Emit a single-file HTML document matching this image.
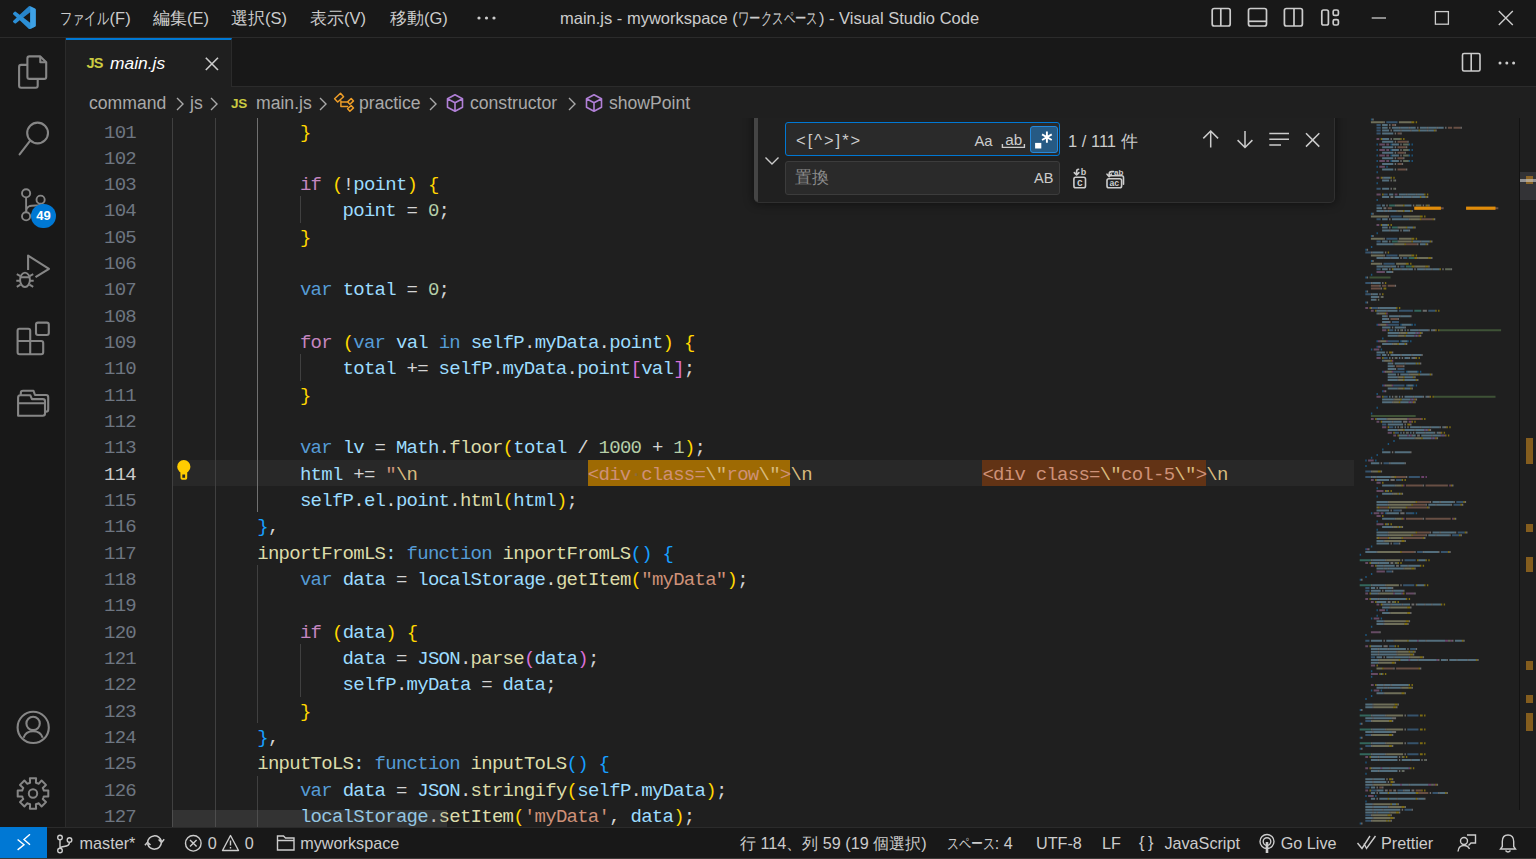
<!DOCTYPE html><html><head><meta charset="utf-8"><style>
*{margin:0;padding:0;box-sizing:border-box}
html,body{width:1536px;height:859px;overflow:hidden;background:#1f1f1f;font-family:"Liberation Sans",sans-serif}
.abs{position:absolute}
#title{position:absolute;left:0;top:0;width:1536px;height:38px;background:#181818;border-bottom:1px solid #2b2b2b}
.menu{position:absolute;top:8px;font-size:16.5px;color:#cccccc;white-space:nowrap;line-height:20px}
#act{position:absolute;left:0;top:38px;width:66px;height:789px;background:#181818;border-right:1px solid #2b2b2b}
#tabs{position:absolute;left:66px;top:38px;width:1470px;height:49px;background:#181818;border-bottom:1px solid #2b2b2b}
#tab{position:absolute;left:0;top:0;width:166px;height:49px;background:#1f1f1f;border-top:2px solid #0078d4;border-right:1px solid #2b2b2b}
#crumbs{position:absolute;left:66px;top:87px;width:1470px;height:31px;background:#1f1f1f}
.bc{position:absolute;top:5px;font-size:17.6px;color:#a9a9a9;white-space:nowrap;line-height:22px}
#editor{position:absolute;left:66px;top:117px;width:1470px;height:710px;background:#1f1f1f;overflow:hidden}
.ln{position:absolute;left:60px;width:76px;text-align:right;font-family:"Liberation Mono",monospace;font-size:19px;letter-spacing:-0.74px;line-height:26.32px;color:#6e7681}
.ln.act{color:#cccccc}
.gd{position:absolute;width:1px;height:26.4px;background:#404040}
.ga{background:#707070}
.cl{position:absolute;left:172.0px;white-space:pre;font-family:"Liberation Mono",monospace;font-size:19px;letter-spacing:-0.74px;line-height:26.32px}
.m1{background:#9e6a03;color:#ce9178}
.m2{background:#623315;color:#ce9178}
.ws{color:#8a6a3a}
#status{position:absolute;left:0;top:827px;width:1536px;height:31px;background:#181818;border-top:1px solid #2b2b2b;}
.st{position:absolute;top:5px;font-size:16.2px;color:#cccccc;white-space:nowrap;line-height:20px}
</style></head><body>
<div id="title">
<svg class="abs" style="left:13px;top:5.7px" width="22.8" height="23.2" viewBox="0 0 100 100" preserveAspectRatio="none"><path fill="#2c8fd6" d="M96.46 10.8L75.86.87a6.23 6.23 0 0 0-7.1 1.2L29.35 38.04 12.17 25.01a4.16 4.16 0 0 0-5.32.24L1.34 30.26a4.17 4.17 0 0 0 0 6.16L16.24 50 1.35 63.58a4.17 4.17 0 0 0 0 6.16l5.5 5.01a4.16 4.16 0 0 0 5.330.24l17.18-13.03 39.41 35.96a6.22 6.22 0 0 0 7.1 1.2l20.6-9.92A6.25 6.25 0 0 0 100 83.580V16.42a6.25 6.25 0 0 0-3.54-5.630zM75.01 72.7 45.11 50l29.9-22.7v45.4z"/><path fill="#1f6fb4" d="M96.46 10.8L75.86.87a6.23 6.23 0 0 0-7.1 1.2L29.35 38.04 45.11 50l29.9-22.7V.9z" opacity="0.35"/><path fill="#4fb3f6" d="M75.86.87v98.26l20.6-9.92A6.25 6.25 0 0 0 100 83.58V16.42a6.25 6.25 0 0 0-3.54-5.63z" opacity="0.5"/></svg>
<div class="menu" style="left:60px;width:70px"><span style="display:inline-block;transform:scaleX(0.72);transform-origin:0 0;margin-right:-18.4px">ファイル</span>(F)</div>
<div class="menu" style="left:153px;width:55px">編集(E)</div>
<div class="menu" style="left:231px;width:55px">選択(S)</div>
<div class="menu" style="left:310px;width:57px">表示(V)</div>
<div class="menu" style="left:390px;width:58px">移動(G)</div>
<svg class="abs" style="left:476px;top:15px" width="22" height="6"><circle cx="3" cy="3" r="1.6" fill="#cccccc"/><circle cx="10.5" cy="3" r="1.6" fill="#cccccc"/><circle cx="18" cy="3" r="1.6" fill="#cccccc"/></svg>
<div class="menu" style="left:560px">main.js - myworkspace (<span style="display:inline-block;transform:scaleX(0.67);transform-origin:0 0;margin-right:-38px">ワークスペース</span>) - Visual Studio Code</div>
<svg class="abs" style="left:0;top:0" width="1536" height="38" fill="none" stroke="#cccccc" stroke-width="1.7">
<rect x="1212.2" y="8.5" width="18" height="17.5" rx="2"/><line x1="1220.8" y1="8.5" x2="1220.8" y2="26"/>
<rect x="1248.5" y="8.5" width="18" height="17.5" rx="2"/><line x1="1248.5" y1="21.3" x2="1266.5" y2="21.3"/>
<rect x="1284.4" y="8.5" width="18" height="17.5" rx="2"/><line x1="1294" y1="8.5" x2="1294" y2="26"/>
<rect x="1321.8" y="10" width="6.6" height="15" rx="1.8"/><rect x="1333.2" y="10" width="5.2" height="5.4" rx="1.5"/><rect x="1333.2" y="19.6" width="5.2" height="5.4" rx="1.5"/>
<line x1="1371.7" y1="18" x2="1386" y2="18" stroke-width="1.3"/>
<rect x="1435.4" y="11.6" width="13" height="12.6" stroke-width="1.3"/>
<path d="M1498.8 11 L1512.8 25 M1512.8 11 L1498.8 25" stroke-width="1.4"/>
</svg>
</div>
<div id="act"><svg class="abs" style="left:0;top:-38px" width="66" height="827" fill="none" stroke="#868686" stroke-width="2.1" stroke-linejoin="round">
<path d="M27.4 64.9 H21.1 Q19.1 64.9 19.1 66.9 V85.7 Q19.1 87.7 21.1 87.7 H35.7 Q37.7 87.7 37.7 85.7 V78.9"/>
<path d="M29.4 56.4 H40.3 L46.2 62.3 V76.9 Q46.2 78.9 44.2 78.9 H29.4 Q27.4 78.9 27.4 76.9 V58.4 Q27.4 56.4 29.4 56.4 Z"/><path d="M40.3 56.4 V62.3 H46.2"/>
<circle cx="37.6" cy="133" r="10.4"/><path d="M30.2 140.6 L19.6 154.4" stroke-linecap="round"/>
<circle cx="26.1" cy="193.3" r="4.1" stroke-width="1.9"/><circle cx="40.6" cy="199.7" r="4.1" stroke-width="1.9"/><circle cx="26.1" cy="216.3" r="4.1" stroke-width="1.9"/>
<path d="M26.1 197.4 V212.2 M26.1 212 C26.1 206 30 205.5 36 205.5 C39 205.5 40.6 205 40.6 203.8" stroke-width="1.9"/>
<path d="M28.1 270 V255.6 L49 268.8 L35.5 277.2"/>
<ellipse cx="25" cy="279.8" rx="4.9" ry="7.2" stroke-width="1.9"/><path d="M20.3 277.3 H29.7 M16.8 274.2 L20.4 276.2 M16.3 280.8 H20.1 M16.8 286.9 L20.5 284.6 M33.2 274.2 L29.6 276.2 M33.7 280.8 H29.9 M33.2 286.9 L29.5 284.6" stroke-width="1.9"/>
<path d="M19.4 328.7 H28.3 Q30.2 328.7 30.2 330.6 V341 H41.2 Q43.2 341 43.2 343 V352.2 Q43.2 354.2 41.2 354.2 H19.6 Q17.6 354.2 17.6 352.2 V330.6 Q17.6 328.7 19.4 328.7 Z M17.6 341 H30.2 V354.2"/><rect x="36" y="322.6" width="12.8" height="12.4" rx="2"/>
<path d="M18.1 415.7 V397.5 Q18.1 395.2 20.4 395.2 H30.3 L31.9 399.1 H42.8 Q45 399.1 45 401.3 V413.5 Q45 415.7 42.8 415.7 Z M18.1 403.3 H45"/><path d="M20.8 395 V393 Q20.8 390.8 23 390.8 H33.5 L35 395 H46 Q48.2 395 48.2 397.2 V409.6 Q48.2 411.8 46 411.8 H45"/>
<circle cx="33.2" cy="727.4" r="15.6" stroke-width="2.1"/><circle cx="33.1" cy="723.4" r="6.7" stroke-width="2.1"/><path d="M23.5 737.8 Q25.5 731.2 33.1 731.2 Q40.7 731.2 42.7 737.8" stroke-width="2.1"/>
<path d="M28.7 783.2 L30.1 782.7 L29.9 778.2 L36.1 778.2 L35.9 782.7 L37.3 783.2 L37.3 783.2 L38.6 783.8 L41.6 780.5 L46.0 784.9 L42.7 787.9 L43.3 789.2 L43.3 789.2 L43.8 790.6 L48.3 790.4 L48.3 796.6 L43.8 796.4 L43.3 797.8 L43.3 797.8 L42.7 799.1 L46.0 802.1 L41.6 806.5 L38.6 803.2 L37.3 803.8 L37.3 803.8 L35.9 804.3 L36.1 808.8 L29.9 808.8 L30.1 804.3 L28.7 803.8 L28.7 803.8 L27.4 803.2 L24.4 806.5 L20.0 802.1 L23.3 799.1 L22.7 797.8 L22.7 797.8 L22.2 796.4 L17.7 796.6 L17.7 790.4 L22.2 790.6 L22.7 789.2 L22.7 789.2 L23.3 787.9 L20.0 784.9 L24.4 780.5 L27.4 783.8 L28.7 783.2 Z" stroke-width="2"/>
<circle cx="33" cy="793.5" r="4.2" stroke-width="2"/>
</svg>
<div class="abs" style="left:31.4px;top:166.4px;width:24.4px;height:23.4px;border-radius:12px;background:#0078d4;color:#fff;font-size:13px;font-weight:bold;text-align:center;line-height:23.4px">49</div></div>
<div id="tabs"><div id="tab"></div></div>
<div class="abs" style="left:86.5px;top:53.5px;font-size:14.5px;font-weight:bold;color:#cbcb41;letter-spacing:-0.8px;line-height:18px">JS</div>
<div class="abs" style="left:110px;top:52px;font-size:17.4px;font-style:italic;color:#ffffff;line-height:22px">main.js</div>
<svg class="abs" style="left:204px;top:56px" width="16" height="16" fill="none" stroke="#cccccc" stroke-width="1.6"><path d="M1.8 1.8 L14 14 M14 1.8 L1.8 14"/></svg>
<svg class="abs" style="left:1461px;top:52px" width="20" height="20" fill="none" stroke="#cccccc" stroke-width="1.6"><rect x="1.5" y="1.5" width="17.5" height="17.5" rx="1.5"/><line x1="10.2" y1="1.5" x2="10.2" y2="19"/></svg>
<svg class="abs" style="left:1497px;top:60px" width="20" height="6"><circle cx="3" cy="3" r="1.5" fill="#cccccc"/><circle cx="9.8" cy="3" r="1.5" fill="#cccccc"/><circle cx="16.6" cy="3" r="1.5" fill="#cccccc"/></svg>
<div id="crumbs"></div>
<div class="bc" style="left:89px;top:92px">command</div><svg class="abs" style="left:175px;top:96px" width="10" height="16" fill="none" stroke="#a9a9a9" stroke-width="1.4"><path d="M2 2 L8 8 L2 14"/></svg><div class="bc" style="left:190px;top:92px">js</div><svg class="abs" style="left:209px;top:96px" width="10" height="16" fill="none" stroke="#a9a9a9" stroke-width="1.4"><path d="M2 2 L8 8 L2 14"/></svg><div class="abs" style="left:231px;top:96px;font-size:13.5px;font-weight:bold;color:#cbcb41;letter-spacing:-0.3px;line-height:16px">JS</div><div class="bc" style="left:256px;top:92px">main.js</div><svg class="abs" style="left:318px;top:96px" width="10" height="16" fill="none" stroke="#a9a9a9" stroke-width="1.4"><path d="M2 2 L8 8 L2 14"/></svg><svg class="abs" style="left:332px;top:90px" width="24" height="24" fill="none" stroke="#ee9d28" stroke-width="1.5" stroke-linejoin="round"><path d="M2.6 8.8 L8.5 3.3 L11.6 6.8 L5.7 12 Z M15.6 11.9 L19.2 8.5 L21.5 10.9 L17.9 14.2 Z M15.6 18.7 L19.2 15.5 L21.5 17.9 L17.9 21.3 Z M8.9 10.5 V16.4 H16.2 M8.6 11.9 H16"/></svg><div class="bc" style="left:359px;top:92px">practice</div><svg class="abs" style="left:428px;top:96px" width="10" height="16" fill="none" stroke="#a9a9a9" stroke-width="1.4"><path d="M2 2 L8 8 L2 14"/></svg><svg class="abs" style="left:445px;top:93px" width="20" height="20" fill="none" stroke="#b180d7" stroke-width="1.6" stroke-linejoin="round"><path d="M10 1.8 L17.5 5.8 V14.2 L10 18.2 L2.5 14.2 V5.8 Z M2.5 5.8 L10 9.8 L17.5 5.8 M10 9.8 V18.2"/></svg><div class="bc" style="left:470px;top:92px">constructor</div><svg class="abs" style="left:567px;top:96px" width="10" height="16" fill="none" stroke="#a9a9a9" stroke-width="1.4"><path d="M2 2 L8 8 L2 14"/></svg><svg class="abs" style="left:584px;top:93px" width="20" height="20" fill="none" stroke="#b180d7" stroke-width="1.6" stroke-linejoin="round"><path d="M10 1.8 L17.5 5.8 V14.2 L10 18.2 L2.5 14.2 V5.8 Z M2.5 5.8 L10 9.8 L17.5 5.8 M10 9.8 V18.2"/></svg><div class="bc" style="left:609px;top:92px">showPoint</div>
<div id="editor"></div>
<div class="abs" style="left:0;top:0;width:1354px;height:827px;overflow:hidden">
<div class="abs" style="left:172px;top:459.66px;width:1182px;height:26.32px;background:#282828"></div>
<div class="abs" style="left:587.74px;top:459.66px;width:202.54px;height:26.32px;background:#9e6a03"></div>
<div class="abs" style="left:982.16px;top:459.66px;width:223.86px;height:26.32px;background:#623315"></div>
<div class="ln" style="top:119.50px">101</div>
<div class="gd" style="left:172.0px;top:117.50px"></div>
<div class="gd" style="left:214.6px;top:117.50px"></div>
<div class="gd ga" style="left:257.3px;top:117.50px"></div>
<div class="cl" style="top:117.50px;padding-top:2px"><span style="color:#d4d4d4">            </span><span style="color:#ffd700">}</span></div>
<div class="ln" style="top:145.82px">102</div>
<div class="gd" style="left:172.0px;top:143.82px"></div>
<div class="gd" style="left:214.6px;top:143.82px"></div>
<div class="gd ga" style="left:257.3px;top:143.82px"></div>
<div class="cl" style="top:143.82px;padding-top:2px"></div>
<div class="ln" style="top:172.14px">103</div>
<div class="gd" style="left:172.0px;top:170.14px"></div>
<div class="gd" style="left:214.6px;top:170.14px"></div>
<div class="gd ga" style="left:257.3px;top:170.14px"></div>
<div class="cl" style="top:170.14px;padding-top:2px"><span style="color:#d4d4d4">            </span><span style="color:#c586c0">if</span><span style="color:#d4d4d4"> </span><span style="color:#ffd700">(</span><span style="color:#d4d4d4">!</span><span style="color:#9cdcfe">point</span><span style="color:#ffd700">)</span><span style="color:#d4d4d4"> </span><span style="color:#ffd700">{</span></div>
<div class="ln" style="top:198.46px">104</div>
<div class="gd" style="left:172.0px;top:196.46px"></div>
<div class="gd" style="left:214.6px;top:196.46px"></div>
<div class="gd ga" style="left:257.3px;top:196.46px"></div>
<div class="gd" style="left:299.9px;top:196.46px"></div>
<div class="cl" style="top:196.46px;padding-top:2px"><span style="color:#d4d4d4">                </span><span style="color:#9cdcfe">point</span><span style="color:#d4d4d4"> = </span><span style="color:#b5cea8">0</span><span style="color:#d4d4d4">;</span></div>
<div class="ln" style="top:224.78px">105</div>
<div class="gd" style="left:172.0px;top:222.78px"></div>
<div class="gd" style="left:214.6px;top:222.78px"></div>
<div class="gd ga" style="left:257.3px;top:222.78px"></div>
<div class="cl" style="top:222.78px;padding-top:2px"><span style="color:#d4d4d4">            </span><span style="color:#ffd700">}</span></div>
<div class="ln" style="top:251.10px">106</div>
<div class="gd" style="left:172.0px;top:249.10px"></div>
<div class="gd" style="left:214.6px;top:249.10px"></div>
<div class="gd ga" style="left:257.3px;top:249.10px"></div>
<div class="cl" style="top:249.10px;padding-top:2px"></div>
<div class="ln" style="top:277.42px">107</div>
<div class="gd" style="left:172.0px;top:275.42px"></div>
<div class="gd" style="left:214.6px;top:275.42px"></div>
<div class="gd ga" style="left:257.3px;top:275.42px"></div>
<div class="cl" style="top:275.42px;padding-top:2px"><span style="color:#d4d4d4">            </span><span style="color:#569cd6">var</span><span style="color:#d4d4d4"> </span><span style="color:#9cdcfe">total</span><span style="color:#d4d4d4"> = </span><span style="color:#b5cea8">0</span><span style="color:#d4d4d4">;</span></div>
<div class="ln" style="top:303.74px">108</div>
<div class="gd" style="left:172.0px;top:301.74px"></div>
<div class="gd" style="left:214.6px;top:301.74px"></div>
<div class="gd ga" style="left:257.3px;top:301.74px"></div>
<div class="cl" style="top:301.74px;padding-top:2px"></div>
<div class="ln" style="top:330.06px">109</div>
<div class="gd" style="left:172.0px;top:328.06px"></div>
<div class="gd" style="left:214.6px;top:328.06px"></div>
<div class="gd ga" style="left:257.3px;top:328.06px"></div>
<div class="cl" style="top:328.06px;padding-top:2px"><span style="color:#d4d4d4">            </span><span style="color:#c586c0">for</span><span style="color:#d4d4d4"> </span><span style="color:#ffd700">(</span><span style="color:#569cd6">var</span><span style="color:#d4d4d4"> </span><span style="color:#9cdcfe">val</span><span style="color:#d4d4d4"> </span><span style="color:#569cd6">in</span><span style="color:#d4d4d4"> </span><span style="color:#9cdcfe">selfP</span><span style="color:#d4d4d4">.</span><span style="color:#9cdcfe">myData</span><span style="color:#d4d4d4">.</span><span style="color:#9cdcfe">point</span><span style="color:#ffd700">)</span><span style="color:#d4d4d4"> </span><span style="color:#ffd700">{</span></div>
<div class="ln" style="top:356.38px">110</div>
<div class="gd" style="left:172.0px;top:354.38px"></div>
<div class="gd" style="left:214.6px;top:354.38px"></div>
<div class="gd ga" style="left:257.3px;top:354.38px"></div>
<div class="gd" style="left:299.9px;top:354.38px"></div>
<div class="cl" style="top:354.38px;padding-top:2px"><span style="color:#d4d4d4">                </span><span style="color:#9cdcfe">total</span><span style="color:#d4d4d4"> += </span><span style="color:#9cdcfe">selfP</span><span style="color:#d4d4d4">.</span><span style="color:#9cdcfe">myData</span><span style="color:#d4d4d4">.</span><span style="color:#9cdcfe">point</span><span style="color:#da70d6">[</span><span style="color:#9cdcfe">val</span><span style="color:#da70d6">]</span><span style="color:#d4d4d4">;</span></div>
<div class="ln" style="top:382.70px">111</div>
<div class="gd" style="left:172.0px;top:380.70px"></div>
<div class="gd" style="left:214.6px;top:380.70px"></div>
<div class="gd ga" style="left:257.3px;top:380.70px"></div>
<div class="cl" style="top:380.70px;padding-top:2px"><span style="color:#d4d4d4">            </span><span style="color:#ffd700">}</span></div>
<div class="ln" style="top:409.02px">112</div>
<div class="gd" style="left:172.0px;top:407.02px"></div>
<div class="gd" style="left:214.6px;top:407.02px"></div>
<div class="gd ga" style="left:257.3px;top:407.02px"></div>
<div class="cl" style="top:407.02px;padding-top:2px"></div>
<div class="ln" style="top:435.34px">113</div>
<div class="gd" style="left:172.0px;top:433.34px"></div>
<div class="gd" style="left:214.6px;top:433.34px"></div>
<div class="gd ga" style="left:257.3px;top:433.34px"></div>
<div class="cl" style="top:433.34px;padding-top:2px"><span style="color:#d4d4d4">            </span><span style="color:#569cd6">var</span><span style="color:#d4d4d4"> </span><span style="color:#9cdcfe">lv</span><span style="color:#d4d4d4"> = </span><span style="color:#9cdcfe">Math</span><span style="color:#d4d4d4">.</span><span style="color:#dcdcaa">floor</span><span style="color:#ffd700">(</span><span style="color:#9cdcfe">total</span><span style="color:#d4d4d4"> / </span><span style="color:#b5cea8">1000</span><span style="color:#d4d4d4"> + </span><span style="color:#b5cea8">1</span><span style="color:#ffd700">)</span><span style="color:#d4d4d4">;</span></div>
<div class="ln act" style="top:461.66px">114</div>
<div class="gd" style="left:172.0px;top:459.66px"></div>
<div class="gd" style="left:214.6px;top:459.66px"></div>
<div class="gd ga" style="left:257.3px;top:459.66px"></div>
<div class="cl" style="top:459.66px;padding-top:2px"><span style="color:#d4d4d4">            </span><span style="color:#9cdcfe">html</span><span style="color:#d4d4d4"> += </span><span style="color:#ce9178">&quot;</span><span style="color:#d7ba7d">\n</span><span style="color:#ce9178">                </span><span style="color:#ce9178">&lt;div</span><span class=ws>·</span><span style="color:#ce9178">class=</span><span style="color:#d7ba7d">\&quot;</span><span style="color:#ce9178">row</span><span style="color:#d7ba7d">\&quot;</span><span style="color:#ce9178">&gt;</span><span style="color:#d7ba7d">\n</span><span style="color:#ce9178">                </span><span style="color:#ce9178">&lt;div class=</span><span style="color:#d7ba7d">\&quot;</span><span style="color:#ce9178">col-5</span><span style="color:#d7ba7d">\&quot;</span><span style="color:#ce9178">&gt;</span><span style="color:#d7ba7d">\n</span></div>
<div class="ln" style="top:487.98px">115</div>
<div class="gd" style="left:172.0px;top:485.98px"></div>
<div class="gd" style="left:214.6px;top:485.98px"></div>
<div class="gd ga" style="left:257.3px;top:485.98px"></div>
<div class="cl" style="top:485.98px;padding-top:2px"><span style="color:#d4d4d4">            </span><span style="color:#9cdcfe">selfP</span><span style="color:#d4d4d4">.</span><span style="color:#9cdcfe">el</span><span style="color:#d4d4d4">.</span><span style="color:#9cdcfe">point</span><span style="color:#d4d4d4">.</span><span style="color:#dcdcaa">html</span><span style="color:#ffd700">(</span><span style="color:#9cdcfe">html</span><span style="color:#ffd700">)</span><span style="color:#d4d4d4">;</span></div>
<div class="ln" style="top:514.30px">116</div>
<div class="gd" style="left:172.0px;top:512.30px"></div>
<div class="gd" style="left:214.6px;top:512.30px"></div>
<div class="cl" style="top:512.30px;padding-top:2px"><span style="color:#d4d4d4">        </span><span style="color:#179fff">}</span><span style="color:#d4d4d4">,</span></div>
<div class="ln" style="top:540.62px">117</div>
<div class="gd" style="left:172.0px;top:538.62px"></div>
<div class="gd" style="left:214.6px;top:538.62px"></div>
<div class="cl" style="top:538.62px;padding-top:2px"><span style="color:#d4d4d4">        </span><span style="color:#dcdcaa">inportFromLS</span><span style="color:#9cdcfe">:</span><span style="color:#d4d4d4"> </span><span style="color:#569cd6">function</span><span style="color:#d4d4d4"> </span><span style="color:#dcdcaa">inportFromLS</span><span style="color:#179fff">()</span><span style="color:#d4d4d4"> </span><span style="color:#179fff">{</span></div>
<div class="ln" style="top:566.94px">118</div>
<div class="gd" style="left:172.0px;top:564.94px"></div>
<div class="gd" style="left:214.6px;top:564.94px"></div>
<div class="gd" style="left:257.3px;top:564.94px"></div>
<div class="cl" style="top:564.94px;padding-top:2px"><span style="color:#d4d4d4">            </span><span style="color:#569cd6">var</span><span style="color:#d4d4d4"> </span><span style="color:#9cdcfe">data</span><span style="color:#d4d4d4"> = </span><span style="color:#9cdcfe">localStorage</span><span style="color:#d4d4d4">.</span><span style="color:#dcdcaa">getItem</span><span style="color:#ffd700">(</span><span style="color:#ce9178">&quot;myData&quot;</span><span style="color:#ffd700">)</span><span style="color:#d4d4d4">;</span></div>
<div class="ln" style="top:593.26px">119</div>
<div class="gd" style="left:172.0px;top:591.26px"></div>
<div class="gd" style="left:214.6px;top:591.26px"></div>
<div class="gd" style="left:257.3px;top:591.26px"></div>
<div class="cl" style="top:591.26px;padding-top:2px"></div>
<div class="ln" style="top:619.58px">120</div>
<div class="gd" style="left:172.0px;top:617.58px"></div>
<div class="gd" style="left:214.6px;top:617.58px"></div>
<div class="gd" style="left:257.3px;top:617.58px"></div>
<div class="cl" style="top:617.58px;padding-top:2px"><span style="color:#d4d4d4">            </span><span style="color:#c586c0">if</span><span style="color:#d4d4d4"> </span><span style="color:#ffd700">(</span><span style="color:#9cdcfe">data</span><span style="color:#ffd700">)</span><span style="color:#d4d4d4"> </span><span style="color:#ffd700">{</span></div>
<div class="ln" style="top:645.90px">121</div>
<div class="gd" style="left:172.0px;top:643.90px"></div>
<div class="gd" style="left:214.6px;top:643.90px"></div>
<div class="gd" style="left:257.3px;top:643.90px"></div>
<div class="gd" style="left:299.9px;top:643.90px"></div>
<div class="cl" style="top:643.90px;padding-top:2px"><span style="color:#d4d4d4">                </span><span style="color:#9cdcfe">data</span><span style="color:#d4d4d4"> = </span><span style="color:#9cdcfe">JSON</span><span style="color:#d4d4d4">.</span><span style="color:#dcdcaa">parse</span><span style="color:#da70d6">(</span><span style="color:#9cdcfe">data</span><span style="color:#da70d6">)</span><span style="color:#d4d4d4">;</span></div>
<div class="ln" style="top:672.22px">122</div>
<div class="gd" style="left:172.0px;top:670.22px"></div>
<div class="gd" style="left:214.6px;top:670.22px"></div>
<div class="gd" style="left:257.3px;top:670.22px"></div>
<div class="gd" style="left:299.9px;top:670.22px"></div>
<div class="cl" style="top:670.22px;padding-top:2px"><span style="color:#d4d4d4">                </span><span style="color:#9cdcfe">selfP</span><span style="color:#d4d4d4">.</span><span style="color:#9cdcfe">myData</span><span style="color:#d4d4d4"> = </span><span style="color:#9cdcfe">data</span><span style="color:#d4d4d4">;</span></div>
<div class="ln" style="top:698.54px">123</div>
<div class="gd" style="left:172.0px;top:696.54px"></div>
<div class="gd" style="left:214.6px;top:696.54px"></div>
<div class="gd" style="left:257.3px;top:696.54px"></div>
<div class="cl" style="top:696.54px;padding-top:2px"><span style="color:#d4d4d4">            </span><span style="color:#ffd700">}</span></div>
<div class="ln" style="top:724.86px">124</div>
<div class="gd" style="left:172.0px;top:722.86px"></div>
<div class="gd" style="left:214.6px;top:722.86px"></div>
<div class="cl" style="top:722.86px;padding-top:2px"><span style="color:#d4d4d4">        </span><span style="color:#179fff">}</span><span style="color:#d4d4d4">,</span></div>
<div class="ln" style="top:751.18px">125</div>
<div class="gd" style="left:172.0px;top:749.18px"></div>
<div class="gd" style="left:214.6px;top:749.18px"></div>
<div class="cl" style="top:749.18px;padding-top:2px"><span style="color:#d4d4d4">        </span><span style="color:#dcdcaa">inputToLS</span><span style="color:#9cdcfe">:</span><span style="color:#d4d4d4"> </span><span style="color:#569cd6">function</span><span style="color:#d4d4d4"> </span><span style="color:#dcdcaa">inputToLS</span><span style="color:#179fff">()</span><span style="color:#d4d4d4"> </span><span style="color:#179fff">{</span></div>
<div class="ln" style="top:777.50px">126</div>
<div class="gd" style="left:172.0px;top:775.50px"></div>
<div class="gd" style="left:214.6px;top:775.50px"></div>
<div class="gd" style="left:257.3px;top:775.50px"></div>
<div class="cl" style="top:775.50px;padding-top:2px"><span style="color:#d4d4d4">            </span><span style="color:#569cd6">var</span><span style="color:#d4d4d4"> </span><span style="color:#9cdcfe">data</span><span style="color:#d4d4d4"> = </span><span style="color:#9cdcfe">JSON</span><span style="color:#d4d4d4">.</span><span style="color:#dcdcaa">stringify</span><span style="color:#ffd700">(</span><span style="color:#9cdcfe">selfP</span><span style="color:#d4d4d4">.</span><span style="color:#9cdcfe">myData</span><span style="color:#ffd700">)</span><span style="color:#d4d4d4">;</span></div>
<div class="ln" style="top:803.82px">127</div>
<div class="gd" style="left:172.0px;top:801.82px"></div>
<div class="gd" style="left:214.6px;top:801.82px"></div>
<div class="gd" style="left:257.3px;top:801.82px"></div>
<div class="cl" style="top:801.82px;padding-top:2px"><span style="color:#d4d4d4">            </span><span style="color:#9cdcfe">localStorage</span><span style="color:#d4d4d4">.</span><span style="color:#dcdcaa">setItem</span><span style="color:#ffd700">(</span><span style="color:#ce9178">&#x27;myData&#x27;</span><span style="color:#d4d4d4">, </span><span style="color:#9cdcfe">data</span><span style="color:#ffd700">)</span><span style="color:#d4d4d4">;</span></div>
<svg class="abs" style="left:170px;top:455px" width="30" height="30"><circle cx="13.8" cy="11.7" r="6.6" fill="#ffcc00"/><path d="M10.3 14 H17.3 L17.2 23 Q17.2 24.8 15.5 24.8 H12.2 Q10.5 24.8 10.5 23 Z" fill="#ffcc00"/><rect x="12.3" y="19.5" width="2.8" height="3.3" fill="#282828"/></svg>
<div class="abs" style="left:172px;top:810px;width:275px;height:17px;background:rgba(121,121,121,0.22)"></div>
</div>
<div class="abs" style="left:0;top:117.5px;width:1354px;height:120px;overflow:hidden">
<div class="abs" style="left:754px;top:-10px;width:581px;height:95.8px;background:#202020;border:1px solid #303030;border-left:none;border-radius:0 0 5px 5px;box-shadow:0 0 8px 2px rgba(0,0,0,0.36);overflow:hidden">
<div class="abs" style="left:0;top:0;width:4px;height:96px;background:#454545"></div>
</div></div>
<svg class="abs" style="left:764px;top:154px" width="16" height="14" fill="none" stroke="#cccccc" stroke-width="1.4"><path d="M1.5 3.5 L8 10 L14.5 3.5"/></svg>
<div class="abs" style="left:784.7px;top:121.7px;width:275.7px;height:34.8px;background:#2a2a2a;border:1.5px solid #0078d4;border-radius:3px"></div>
<div class="abs" style="left:796px;top:129px;font-size:16.5px;color:#cccccc;line-height:22px;letter-spacing:2px">&lt;[^&gt;]*&gt;</div>
<div class="abs" style="left:974.5px;top:130.5px;font-size:14.8px;color:#cccccc;line-height:20px">Aa</div>
<div class="abs" style="left:1005.2px;top:129.5px;font-size:15.3px;color:#cccccc;line-height:20px">ab</div>
<svg class="abs" style="left:1000px;top:141px" width="28" height="8" fill="none" stroke="#cccccc" stroke-width="1.4"><path d="M2.4 3 V6.4 H24.4 V3"/></svg>
<div class="abs" style="left:1030.3px;top:126px;width:27.3px;height:27.2px;background:rgba(36,137,219,0.51);border:1px solid #2488db;border-radius:3px"></div>
<svg class="abs" style="left:1030px;top:126px" width="28" height="28"><rect x="5.1" y="16.9" width="6.2" height="5.6" fill="#ffffff"/><path d="M16.9 5.6 V16.8 M12.05 8.4 L21.75 14 M12.05 14 L21.75 8.4" stroke="#ffffff" stroke-width="1.9" fill="none"/></svg>
<div class="abs" style="left:784.7px;top:161px;width:275.7px;height:33.7px;background:#2a2a2a;border:1px solid #3c3c3c;border-radius:3px"></div>
<div class="abs" style="left:795px;top:167px;font-size:17px;color:#8b8b8b;line-height:22px">置換</div>
<div class="abs" style="left:1034px;top:169px;font-size:14.5px;color:#cccccc;line-height:18px">AB</div>
<div class="abs" style="left:1068px;top:131px;font-size:16.5px;color:#cccccc;line-height:20px">1 / 111 件</div>
<svg class="abs" style="left:1196px;top:125px" width="132" height="28" fill="none" stroke="#cccccc" stroke-width="1.5">
<path d="M14.7 6 V22.5 M7.3 13.4 L14.7 6 L22.1 13.4"/>
<path d="M49 6 V22.5 M41.6 15.1 L49 22.5 L56.4 15.1"/>
<path d="M73.3 8.5 H93 M73.3 14.3 H93 M73.3 20.1 H85"/>
<path d="M110 8.3 L123.3 21.6 M123.3 8.3 L110 21.6"/>
</svg>
<svg class="abs" style="left:1066px;top:162px" width="66" height="32" fill="none" stroke="#cccccc" stroke-width="1.6" stroke-linejoin="round" stroke-linecap="round">
<rect x="7.9" y="15.3" width="11.6" height="10.4" rx="1.8"/>
<text x="13.7" y="23.9" font-size="10" fill="#cccccc" stroke="none" font-weight="bold" text-anchor="middle" font-family="Liberation Sans">c</text>
<path d="M12.6 7.3 Q10.6 7.3 10.6 9.8 V12.8 M8.3 10.6 L10.6 13 L12.9 10.6"/>
<text x="14.8" y="12.9" font-size="9" fill="#cccccc" stroke="none" font-weight="bold" font-family="Liberation Sans">b</text>
<rect x="41" y="16.8" width="14.6" height="9" rx="1.8"/>
<path d="M44.8 13.8 H55.8 Q57.5 13.8 57.5 15.5 V22.3"/>
<text x="48.3" y="24" font-size="8.6" fill="#cccccc" stroke="none" font-weight="bold" text-anchor="middle" font-family="Liberation Sans">ac</text>
<path d="M47.5 9.6 H45.6 Q43.2 9.6 43.2 12 V14.4 M41 12.2 L43.2 14.6 L45.4 12.2"/>
<text x="48" y="12.6" font-size="8" fill="#cccccc" stroke="none" font-weight="bold" font-family="Liberation Sans">ab</text>
</svg>
<svg class="abs" style="left:1354px;top:117.5px" width="166" height="710"><path fill="#179fff" opacity="0.42" d="M16.9 0.5h1.4v2.0h-1.4zM22.5 25.5h1.4v2.0h-1.4zM36.5 25.5h1.4v2.0h-1.4zM54.7 25.5h1.4v2.0h-1.4zM57.5 25.5h1.4v2.0h-1.4zM22.5 31.0h1.4v2.0h-1.4zM36.5 31.0h1.4v2.0h-1.4zM54.7 31.0h1.4v2.0h-1.4zM57.5 31.0h1.4v2.0h-1.4zM22.5 36.6h1.4v2.0h-1.4zM36.5 36.6h1.4v2.0h-1.4zM54.7 36.6h1.4v2.0h-1.4zM57.5 36.6h1.4v2.0h-1.4zM22.5 42.1h1.4v2.0h-1.4zM36.5 42.1h1.4v2.0h-1.4zM54.7 42.1h1.4v2.0h-1.4zM57.5 42.1h1.4v2.0h-1.4zM22.5 47.7h1.4v2.0h-1.4zM32.3 47.7h1.4v2.0h-1.4zM22.5 53.2h1.4v2.0h-1.4zM22.5 64.3h1.4v2.0h-1.4zM22.5 80.9h1.4v2.0h-1.4zM16.9 94.8h1.4v2.0h-1.4zM22.5 114.2h1.4v2.0h-1.4zM16.9 117.0h1.4v2.0h-1.4zM16.9 128.0h1.4v2.0h-1.4zM11.3 130.8h1.4v2.0h-1.4zM16.9 141.9h1.4v2.0h-1.4zM16.9 155.8h1.4v2.0h-1.4zM11.3 158.5h1.4v2.0h-1.4zM11.3 172.4h1.4v2.0h-1.4zM11.3 183.5h1.4v2.0h-1.4zM22.5 205.7h1.4v2.0h-1.4zM46.3 205.7h1.4v2.0h-1.4zM57.5 205.7h1.4v2.0h-1.4zM60.3 205.7h1.4v2.0h-1.4zM28.1 219.5h1.4v2.0h-1.4zM22.5 222.3h1.4v2.0h-1.4zM46.3 222.3h1.4v2.0h-1.4zM53.3 222.3h1.4v2.0h-1.4zM56.1 222.3h1.4v2.0h-1.4zM22.5 227.8h1.4v2.0h-1.4zM16.9 230.6h1.4v2.0h-1.4zM26.7 230.6h1.4v2.0h-1.4zM28.1 252.8h1.4v2.0h-1.4zM51.9 252.8h1.4v2.0h-1.4zM63.1 252.8h1.4v2.0h-1.4zM65.9 252.8h1.4v2.0h-1.4zM28.1 266.6h1.4v2.0h-1.4zM51.9 266.6h1.4v2.0h-1.4zM58.9 266.6h1.4v2.0h-1.4zM61.7 266.6h1.4v2.0h-1.4zM28.1 272.2h1.4v2.0h-1.4zM22.5 275.0h1.4v2.0h-1.4zM22.5 288.8h1.4v2.0h-1.4zM16.9 294.4h1.4v2.0h-1.4zM39.3 322.1h1.4v2.0h-1.4zM33.7 324.9h1.4v2.0h-1.4zM28.1 330.4h1.4v2.0h-1.4zM22.5 335.9h1.4v2.0h-1.4zM16.9 338.7h1.4v2.0h-1.4zM11.3 341.5h1.4v2.0h-1.4zM21.1 341.5h1.4v2.0h-1.4zM11.3 347.0h1.4v2.0h-1.4zM22.5 369.2h1.4v2.0h-1.4zM22.5 377.5h1.4v2.0h-1.4zM16.9 394.2h1.4v2.0h-1.4zM30.9 394.2h1.4v2.0h-1.4zM58.9 394.2h1.4v2.0h-1.4zM61.7 394.2h1.4v2.0h-1.4zM22.5 402.5h1.4v2.0h-1.4zM22.5 410.8h1.4v2.0h-1.4zM16.9 427.4h1.4v2.0h-1.4zM11.3 430.2h1.4v2.0h-1.4zM5.7 435.7h1.4v2.0h-1.4zM16.9 455.1h1.4v2.0h-1.4zM11.3 457.9h1.4v2.0h-1.4zM5.7 460.7h1.4v2.0h-1.4zM22.5 491.2h1.4v2.0h-1.4zM32.3 491.2h1.4v2.0h-1.4zM22.5 496.7h1.4v2.0h-1.4zM16.9 499.5h1.4v2.0h-1.4zM26.7 499.5h1.4v2.0h-1.4zM16.9 507.8h1.4v2.0h-1.4zM11.3 516.1h1.4v2.0h-1.4zM16.9 552.2h1.4v2.0h-1.4zM16.9 557.7h1.4v2.0h-1.4zM16.9 571.6h1.4v2.0h-1.4zM26.7 571.6h1.4v2.0h-1.4zM16.9 577.1h1.4v2.0h-1.4zM11.3 579.9h1.4v2.0h-1.4zM5.7 591.0h1.4v2.0h-1.4zM5.7 604.8h1.4v2.0h-1.4zM5.7 618.7h1.4v2.0h-1.4zM5.7 629.8h1.4v2.0h-1.4zM11.3 643.6h1.4v2.0h-1.4zM11.3 654.7h1.4v2.0h-1.4zM11.3 676.9h1.4v2.0h-1.4zM21.1 676.9h1.4v2.0h-1.4zM11.3 682.4h1.4v2.0h-1.4zM5.7 704.6h1.4v2.0h-1.4z"/><path fill="#d4d4d4" opacity="0.42" d="M18.3 0.5h1.4v2.0h-1.4zM29.5 3.3h1.4v2.0h-1.4zM35.1 6.1h1.4v2.0h-1.4zM40.7 6.1h1.4v2.0h-1.4zM35.1 8.8h1.4v2.0h-1.4zM44.9 8.8h1.4v2.0h-1.4zM54.7 8.8h1.4v2.0h-1.4zM63.1 8.8h1.4v2.0h-1.4zM72.9 8.8h1.4v2.0h-1.4zM82.7 8.8h1.4v2.0h-1.4zM91.1 8.8h1.4v2.0h-1.4zM106.5 8.8h1.4v2.0h-1.4zM36.5 11.6h1.4v2.0h-1.4zM46.3 11.6h1.4v2.0h-1.4zM56.1 11.6h1.4v2.0h-1.4zM72.9 11.6h1.4v2.0h-1.4zM81.3 11.6h1.4v2.0h-1.4zM40.7 14.4h1.4v2.0h-1.4zM46.3 14.4h1.4v2.0h-1.4zM36.5 19.9h1.4v2.0h-1.4zM40.7 22.7h1.4v2.0h-1.4zM53.3 22.7h1.4v2.0h-1.4zM46.3 25.5h1.4v2.0h-1.4zM40.7 28.2h1.4v2.0h-1.4zM51.9 28.2h1.4v2.0h-1.4zM46.3 31.0h1.4v2.0h-1.4zM40.7 33.8h1.4v2.0h-1.4zM50.5 33.8h1.4v2.0h-1.4zM46.3 36.6h1.4v2.0h-1.4zM40.7 39.3h1.4v2.0h-1.4zM49.1 39.3h1.4v2.0h-1.4zM46.3 42.1h1.4v2.0h-1.4zM40.7 44.9h1.4v2.0h-1.4zM47.7 44.9h1.4v2.0h-1.4zM40.7 50.4h1.4v2.0h-1.4zM51.9 50.4h1.4v2.0h-1.4zM28.1 58.7h1.4v2.0h-1.4zM36.5 61.5h1.4v2.0h-1.4zM40.7 61.5h1.4v2.0h-1.4zM36.5 69.8h1.4v2.0h-1.4zM40.7 69.8h1.4v2.0h-1.4zM51.9 75.4h1.4v2.0h-1.4zM61.7 75.4h1.4v2.0h-1.4zM36.5 78.1h1.4v2.0h-1.4zM37.9 78.1h1.4v2.0h-1.4zM47.7 78.1h1.4v2.0h-1.4zM57.5 78.1h1.4v2.0h-1.4zM72.9 78.1h1.4v2.0h-1.4zM32.3 86.5h1.4v2.0h-1.4zM40.7 86.5h1.4v2.0h-1.4zM58.9 86.5h1.4v2.0h-1.4zM68.7 86.5h1.4v2.0h-1.4zM74.3 86.5h1.4v2.0h-1.4zM29.5 89.2h1.4v2.0h-1.4zM30.9 89.2h1.4v2.0h-1.4zM29.5 92.0h1.4v2.0h-1.4zM33.7 92.0h1.4v2.0h-1.4zM42.1 92.0h1.4v2.0h-1.4zM57.5 92.0h1.4v2.0h-1.4zM18.3 94.8h1.4v2.0h-1.4zM33.7 97.5h1.4v2.0h-1.4zM35.1 100.3h1.4v2.0h-1.4zM54.7 100.3h1.4v2.0h-1.4zM79.9 100.3h1.4v2.0h-1.4zM35.1 108.6h1.4v2.0h-1.4zM43.5 108.6h1.4v2.0h-1.4zM60.3 108.6h1.4v2.0h-1.4zM35.1 111.4h1.4v2.0h-1.4zM46.3 111.4h1.4v2.0h-1.4zM54.7 111.4h1.4v2.0h-1.4zM18.3 117.0h1.4v2.0h-1.4zM29.5 119.7h1.4v2.0h-1.4zM35.1 122.5h1.4v2.0h-1.4zM43.5 122.5h1.4v2.0h-1.4zM65.9 122.5h1.4v2.0h-1.4zM77.1 122.5h1.4v2.0h-1.4zM39.3 125.3h1.4v2.0h-1.4zM63.1 125.3h1.4v2.0h-1.4zM72.9 125.3h1.4v2.0h-1.4zM12.7 130.8h1.4v2.0h-1.4zM16.9 133.6h1.4v2.0h-1.4zM30.9 133.6h1.4v2.0h-1.4zM29.5 136.4h1.4v2.0h-1.4zM29.5 139.1h1.4v2.0h-1.4zM36.5 139.1h1.4v2.0h-1.4zM46.3 139.1h1.4v2.0h-1.4zM63.1 139.1h1.4v2.0h-1.4zM77.1 139.1h1.4v2.0h-1.4zM18.3 141.9h1.4v2.0h-1.4zM26.7 144.7h1.4v2.0h-1.4zM29.5 147.4h1.4v2.0h-1.4zM36.5 147.4h1.4v2.0h-1.4zM43.5 147.4h1.4v2.0h-1.4zM60.3 147.4h1.4v2.0h-1.4zM74.3 147.4h1.4v2.0h-1.4zM35.1 150.2h1.4v2.0h-1.4zM46.3 150.2h1.4v2.0h-1.4zM53.3 150.2h1.4v2.0h-1.4zM60.3 150.2h1.4v2.0h-1.4zM70.1 150.2h1.4v2.0h-1.4zM77.1 150.2h1.4v2.0h-1.4zM88.3 150.2h1.4v2.0h-1.4zM96.7 150.2h1.4v2.0h-1.4zM37.9 153.0h1.4v2.0h-1.4zM12.7 158.5h1.4v2.0h-1.4zM16.9 164.1h1.4v2.0h-1.4zM28.1 164.1h1.4v2.0h-1.4zM25.3 166.8h1.4v2.0h-1.4zM40.7 166.8h1.4v2.0h-1.4zM26.7 169.6h1.4v2.0h-1.4zM12.7 172.4h1.4v2.0h-1.4zM16.9 175.2h1.4v2.0h-1.4zM25.3 175.2h1.4v2.0h-1.4zM23.9 177.9h1.4v2.0h-1.4zM28.1 177.9h1.4v2.0h-1.4zM21.1 180.7h1.4v2.0h-1.4zM12.7 183.5h1.4v2.0h-1.4zM16.9 189.0h1.4v2.0h-1.4zM23.9 189.0h1.4v2.0h-1.4zM32.3 191.8h1.4v2.0h-1.4zM68.7 191.8h1.4v2.0h-1.4zM70.1 191.8h1.4v2.0h-1.4zM71.5 191.8h1.4v2.0h-1.4zM23.9 194.6h1.4v2.0h-1.4zM32.3 197.3h1.4v2.0h-1.4zM44.9 197.3h1.4v2.0h-1.4zM56.1 197.3h1.4v2.0h-1.4zM33.7 200.1h1.4v2.0h-1.4zM43.5 200.1h1.4v2.0h-1.4zM35.1 202.9h1.4v2.0h-1.4zM25.3 205.7h1.4v2.0h-1.4zM37.9 208.4h1.4v2.0h-1.4zM50.5 208.4h1.4v2.0h-1.4zM43.5 211.2h1.4v2.0h-1.4zM47.7 211.2h1.4v2.0h-1.4zM53.3 211.2h1.4v2.0h-1.4zM64.5 211.2h1.4v2.0h-1.4zM74.3 211.2h1.4v2.0h-1.4zM78.5 211.2h1.4v2.0h-1.4zM79.9 211.2h1.4v2.0h-1.4zM44.9 214.0h1.4v2.0h-1.4zM67.3 214.0h1.4v2.0h-1.4zM43.5 216.7h1.4v2.0h-1.4zM65.9 216.7h1.4v2.0h-1.4zM25.3 222.3h1.4v2.0h-1.4zM37.9 225.1h1.4v2.0h-1.4zM51.9 225.1h1.4v2.0h-1.4zM25.3 227.8h1.4v2.0h-1.4zM32.3 233.4h1.4v2.0h-1.4zM37.9 233.4h1.4v2.0h-1.4zM33.7 236.1h1.4v2.0h-1.4zM46.3 236.1h1.4v2.0h-1.4zM57.5 236.1h1.4v2.0h-1.4zM67.3 236.1h1.4v2.0h-1.4zM37.9 238.9h1.4v2.0h-1.4zM42.1 238.9h1.4v2.0h-1.4zM47.7 238.9h1.4v2.0h-1.4zM54.7 238.9h1.4v2.0h-1.4zM58.9 238.9h1.4v2.0h-1.4zM60.3 238.9h1.4v2.0h-1.4zM29.5 241.7h1.4v2.0h-1.4zM37.9 244.5h1.4v2.0h-1.4zM50.5 244.5h1.4v2.0h-1.4zM65.9 244.5h1.4v2.0h-1.4zM39.3 247.2h1.4v2.0h-1.4zM49.1 247.2h1.4v2.0h-1.4zM40.7 250.0h1.4v2.0h-1.4zM30.9 252.8h1.4v2.0h-1.4zM43.5 255.6h1.4v2.0h-1.4zM54.7 255.6h1.4v2.0h-1.4zM77.1 255.6h1.4v2.0h-1.4zM43.5 258.3h1.4v2.0h-1.4zM60.3 258.3h1.4v2.0h-1.4zM43.5 261.1h1.4v2.0h-1.4zM63.1 261.1h1.4v2.0h-1.4zM30.9 266.6h1.4v2.0h-1.4zM43.5 269.4h1.4v2.0h-1.4zM57.5 269.4h1.4v2.0h-1.4zM30.9 272.2h1.4v2.0h-1.4zM37.9 277.7h1.4v2.0h-1.4zM42.1 277.7h1.4v2.0h-1.4zM47.7 277.7h1.4v2.0h-1.4zM58.9 277.7h1.4v2.0h-1.4zM68.7 277.7h1.4v2.0h-1.4zM72.9 277.7h1.4v2.0h-1.4zM74.3 277.7h1.4v2.0h-1.4zM39.3 280.5h1.4v2.0h-1.4zM61.7 280.5h1.4v2.0h-1.4zM37.9 283.3h1.4v2.0h-1.4zM60.3 283.3h1.4v2.0h-1.4zM32.3 299.9h1.4v2.0h-1.4zM37.9 302.7h1.4v2.0h-1.4zM49.1 302.7h1.4v2.0h-1.4zM50.5 302.7h1.4v2.0h-1.4zM51.9 302.7h1.4v2.0h-1.4zM50.5 305.4h1.4v2.0h-1.4zM56.1 305.4h1.4v2.0h-1.4zM43.5 308.2h1.4v2.0h-1.4zM47.7 308.2h1.4v2.0h-1.4zM53.3 308.2h1.4v2.0h-1.4zM65.9 308.2h1.4v2.0h-1.4zM75.7 308.2h1.4v2.0h-1.4zM85.5 308.2h1.4v2.0h-1.4zM89.7 308.2h1.4v2.0h-1.4zM91.1 308.2h1.4v2.0h-1.4zM43.5 311.0h1.4v2.0h-1.4zM60.3 311.0h1.4v2.0h-1.4zM75.7 311.0h1.4v2.0h-1.4zM49.1 313.8h1.4v2.0h-1.4zM53.3 313.8h1.4v2.0h-1.4zM58.9 313.8h1.4v2.0h-1.4zM70.1 313.8h1.4v2.0h-1.4zM79.9 313.8h1.4v2.0h-1.4zM84.1 313.8h1.4v2.0h-1.4zM85.5 313.8h1.4v2.0h-1.4zM57.5 316.5h1.4v2.0h-1.4zM63.1 316.5h1.4v2.0h-1.4zM64.5 316.5h1.4v2.0h-1.4zM77.1 316.5h1.4v2.0h-1.4zM60.3 319.3h1.4v2.0h-1.4zM82.7 319.3h1.4v2.0h-1.4zM37.9 333.2h1.4v2.0h-1.4zM56.1 333.2h1.4v2.0h-1.4zM26.7 344.3h1.4v2.0h-1.4zM35.1 344.3h1.4v2.0h-1.4zM50.5 344.3h1.4v2.0h-1.4zM16.9 352.6h1.4v2.0h-1.4zM26.7 352.6h1.4v2.0h-1.4zM16.9 358.1h1.4v2.0h-1.4zM21.1 358.1h1.4v2.0h-1.4zM36.5 358.1h1.4v2.0h-1.4zM51.9 358.1h1.4v2.0h-1.4zM36.5 360.9h1.4v2.0h-1.4zM37.9 360.9h1.4v2.0h-1.4zM39.3 360.9h1.4v2.0h-1.4zM40.7 366.4h1.4v2.0h-1.4zM68.7 366.4h1.4v2.0h-1.4zM98.1 366.4h1.4v2.0h-1.4zM37.9 374.7h1.4v2.0h-1.4zM47.7 374.7h1.4v2.0h-1.4zM33.7 383.1h1.4v2.0h-1.4zM75.7 383.1h1.4v2.0h-1.4zM85.5 383.1h1.4v2.0h-1.4zM99.5 383.1h1.4v2.0h-1.4zM110.7 383.1h1.4v2.0h-1.4zM33.7 385.8h1.4v2.0h-1.4zM71.5 385.8h1.4v2.0h-1.4zM81.3 385.8h1.4v2.0h-1.4zM96.7 385.8h1.4v2.0h-1.4zM107.9 385.8h1.4v2.0h-1.4zM35.1 388.6h1.4v2.0h-1.4zM74.3 388.6h1.4v2.0h-1.4zM36.5 391.4h1.4v2.0h-1.4zM46.3 391.4h1.4v2.0h-1.4zM46.3 394.2h1.4v2.0h-1.4zM47.7 394.2h1.4v2.0h-1.4zM49.1 394.2h1.4v2.0h-1.4zM40.7 399.7h1.4v2.0h-1.4zM68.7 399.7h1.4v2.0h-1.4zM100.9 399.7h1.4v2.0h-1.4zM37.9 408.0h1.4v2.0h-1.4zM47.7 408.0h1.4v2.0h-1.4zM33.7 413.6h1.4v2.0h-1.4zM75.7 413.6h1.4v2.0h-1.4zM85.5 413.6h1.4v2.0h-1.4zM100.9 413.6h1.4v2.0h-1.4zM112.1 413.6h1.4v2.0h-1.4zM33.7 416.3h1.4v2.0h-1.4zM71.5 416.3h1.4v2.0h-1.4zM81.3 416.3h1.4v2.0h-1.4zM95.3 416.3h1.4v2.0h-1.4zM106.5 416.3h1.4v2.0h-1.4zM35.1 419.1h1.4v2.0h-1.4zM70.1 419.1h1.4v2.0h-1.4zM29.5 421.9h1.4v2.0h-1.4zM50.5 421.9h1.4v2.0h-1.4zM36.5 424.6h1.4v2.0h-1.4zM44.9 424.6h1.4v2.0h-1.4zM14.1 430.2h1.4v2.0h-1.4zM22.5 433.0h1.4v2.0h-1.4zM60.3 433.0h1.4v2.0h-1.4zM68.7 433.0h1.4v2.0h-1.4zM84.1 433.0h1.4v2.0h-1.4zM95.3 433.0h1.4v2.0h-1.4zM16.9 441.3h1.4v2.0h-1.4zM30.9 441.3h1.4v2.0h-1.4zM47.7 441.3h1.4v2.0h-1.4zM23.9 444.0h1.4v2.0h-1.4zM36.5 444.0h1.4v2.0h-1.4zM37.9 444.0h1.4v2.0h-1.4zM29.5 446.8h1.4v2.0h-1.4zM42.1 446.8h1.4v2.0h-1.4zM43.5 446.8h1.4v2.0h-1.4zM53.3 446.8h1.4v2.0h-1.4zM29.5 449.6h1.4v2.0h-1.4zM33.7 449.6h1.4v2.0h-1.4zM49.1 449.6h1.4v2.0h-1.4zM60.3 449.6h1.4v2.0h-1.4zM37.9 452.4h1.4v2.0h-1.4zM7.1 460.7h1.4v2.0h-1.4zM16.9 466.2h1.4v2.0h-1.4zM30.9 466.2h1.4v2.0h-1.4zM46.3 466.2h1.4v2.0h-1.4zM22.5 469.0h1.4v2.0h-1.4zM32.3 469.0h1.4v2.0h-1.4zM37.9 469.0h1.4v2.0h-1.4zM28.1 471.8h1.4v2.0h-1.4zM37.9 471.8h1.4v2.0h-1.4zM49.1 471.8h1.4v2.0h-1.4zM23.9 474.5h1.4v2.0h-1.4zM60.3 474.5h1.4v2.0h-1.4zM23.9 480.1h1.4v2.0h-1.4zM33.7 480.1h1.4v2.0h-1.4zM33.7 482.9h1.4v2.0h-1.4zM35.1 482.9h1.4v2.0h-1.4zM28.1 485.6h1.4v2.0h-1.4zM36.5 485.6h1.4v2.0h-1.4zM47.7 485.6h1.4v2.0h-1.4zM57.5 485.6h1.4v2.0h-1.4zM58.9 485.6h1.4v2.0h-1.4zM61.7 485.6h1.4v2.0h-1.4zM70.1 485.6h1.4v2.0h-1.4zM77.1 485.6h1.4v2.0h-1.4zM35.1 488.4h1.4v2.0h-1.4zM56.1 488.4h1.4v2.0h-1.4zM35.1 493.9h1.4v2.0h-1.4zM56.1 493.9h1.4v2.0h-1.4zM29.5 502.3h1.4v2.0h-1.4zM54.7 502.3h1.4v2.0h-1.4zM29.5 505.0h1.4v2.0h-1.4zM53.3 505.0h1.4v2.0h-1.4zM25.3 513.3h1.4v2.0h-1.4zM29.5 521.7h1.4v2.0h-1.4zM39.3 521.7h1.4v2.0h-1.4zM71.5 521.7h1.4v2.0h-1.4zM98.1 521.7h1.4v2.0h-1.4zM109.3 521.7h1.4v2.0h-1.4zM29.5 527.2h1.4v2.0h-1.4zM30.9 527.2h1.4v2.0h-1.4zM32.3 527.2h1.4v2.0h-1.4zM23.9 530.0h1.4v2.0h-1.4zM33.7 530.0h1.4v2.0h-1.4zM53.3 530.0h1.4v2.0h-1.4zM61.7 530.0h1.4v2.0h-1.4zM23.9 532.8h1.4v2.0h-1.4zM42.1 532.8h1.4v2.0h-1.4zM60.3 532.8h1.4v2.0h-1.4zM23.9 535.5h1.4v2.0h-1.4zM42.1 535.5h1.4v2.0h-1.4zM58.9 535.5h1.4v2.0h-1.4zM29.5 538.3h1.4v2.0h-1.4zM39.3 538.3h1.4v2.0h-1.4zM54.7 538.3h1.4v2.0h-1.4zM68.7 538.3h1.4v2.0h-1.4zM23.9 541.1h1.4v2.0h-1.4zM63.1 541.1h1.4v2.0h-1.4zM84.1 541.1h1.4v2.0h-1.4zM92.5 541.1h1.4v2.0h-1.4zM102.3 541.1h1.4v2.0h-1.4zM113.5 541.1h1.4v2.0h-1.4zM123.3 541.1h1.4v2.0h-1.4zM23.9 543.8h1.4v2.0h-1.4zM40.7 543.8h1.4v2.0h-1.4zM39.3 549.4h1.4v2.0h-1.4zM65.9 549.4h1.4v2.0h-1.4zM29.5 566.0h1.4v2.0h-1.4zM36.5 566.0h1.4v2.0h-1.4zM29.5 568.8h1.4v2.0h-1.4zM33.7 568.8h1.4v2.0h-1.4zM46.3 568.8h1.4v2.0h-1.4zM57.5 568.8h1.4v2.0h-1.4zM29.5 574.3h1.4v2.0h-1.4zM50.5 574.3h1.4v2.0h-1.4zM18.3 585.4h1.4v2.0h-1.4zM43.5 585.4h1.4v2.0h-1.4zM18.3 588.2h1.4v2.0h-1.4zM42.1 588.2h1.4v2.0h-1.4zM7.1 591.0h1.4v2.0h-1.4zM16.9 596.5h1.4v2.0h-1.4zM30.9 596.5h1.4v2.0h-1.4zM50.5 596.5h1.4v2.0h-1.4zM18.3 599.3h1.4v2.0h-1.4zM37.9 599.3h1.4v2.0h-1.4zM39.3 599.3h1.4v2.0h-1.4zM40.7 599.3h1.4v2.0h-1.4zM16.9 602.1h1.4v2.0h-1.4zM37.9 602.1h1.4v2.0h-1.4zM7.1 604.8h1.4v2.0h-1.4zM16.9 610.4h1.4v2.0h-1.4zM30.9 610.4h1.4v2.0h-1.4zM50.5 610.4h1.4v2.0h-1.4zM18.3 613.1h1.4v2.0h-1.4zM37.9 613.1h1.4v2.0h-1.4zM39.3 613.1h1.4v2.0h-1.4zM40.7 613.1h1.4v2.0h-1.4zM16.9 615.9h1.4v2.0h-1.4zM37.9 615.9h1.4v2.0h-1.4zM7.1 618.7h1.4v2.0h-1.4zM16.9 624.2h1.4v2.0h-1.4zM30.9 624.2h1.4v2.0h-1.4zM50.5 624.2h1.4v2.0h-1.4zM16.9 627.0h1.4v2.0h-1.4zM37.9 627.0h1.4v2.0h-1.4zM7.1 629.8h1.4v2.0h-1.4zM16.9 635.3h1.4v2.0h-1.4zM30.9 635.3h1.4v2.0h-1.4zM50.5 635.3h1.4v2.0h-1.4zM23.9 638.1h1.4v2.0h-1.4zM44.9 638.1h1.4v2.0h-1.4zM23.9 640.9h1.4v2.0h-1.4zM44.9 640.9h1.4v2.0h-1.4zM56.1 640.9h1.4v2.0h-1.4zM67.3 640.9h1.4v2.0h-1.4zM71.5 640.9h1.4v2.0h-1.4zM16.9 649.2h1.4v2.0h-1.4zM35.1 649.2h1.4v2.0h-1.4zM23.9 651.9h1.4v2.0h-1.4zM44.9 651.9h1.4v2.0h-1.4zM49.1 651.9h1.4v2.0h-1.4zM18.3 660.3h1.4v2.0h-1.4zM32.3 660.3h1.4v2.0h-1.4zM37.9 660.3h1.4v2.0h-1.4zM18.3 663.0h1.4v2.0h-1.4zM33.7 663.0h1.4v2.0h-1.4zM39.3 663.0h1.4v2.0h-1.4zM18.3 665.8h1.4v2.0h-1.4zM54.7 665.8h1.4v2.0h-1.4zM82.7 665.8h1.4v2.0h-1.4zM22.5 668.6h1.4v2.0h-1.4zM28.1 668.6h1.4v2.0h-1.4zM22.5 671.4h1.4v2.0h-1.4zM30.9 671.4h1.4v2.0h-1.4zM32.3 671.4h1.4v2.0h-1.4zM39.3 671.4h1.4v2.0h-1.4zM40.7 671.4h1.4v2.0h-1.4zM49.1 671.4h1.4v2.0h-1.4zM57.5 671.4h1.4v2.0h-1.4zM58.9 671.4h1.4v2.0h-1.4zM22.5 674.1h1.4v2.0h-1.4zM42.1 674.1h1.4v2.0h-1.4zM75.7 674.1h1.4v2.0h-1.4zM84.1 674.1h1.4v2.0h-1.4zM92.5 674.1h1.4v2.0h-1.4zM22.5 679.7h1.4v2.0h-1.4zM42.1 679.7h1.4v2.0h-1.4zM63.1 679.7h1.4v2.0h-1.4zM70.1 679.7h1.4v2.0h-1.4zM18.3 685.2h1.4v2.0h-1.4zM43.5 685.2h1.4v2.0h-1.4zM18.3 688.0h1.4v2.0h-1.4zM33.7 688.0h1.4v2.0h-1.4zM50.5 688.0h1.4v2.0h-1.4zM18.3 690.8h1.4v2.0h-1.4zM28.1 690.8h1.4v2.0h-1.4zM47.7 690.8h1.4v2.0h-1.4zM57.5 690.8h1.4v2.0h-1.4zM18.3 693.5h1.4v2.0h-1.4zM22.5 693.5h1.4v2.0h-1.4zM35.1 693.5h1.4v2.0h-1.4zM44.9 693.5h1.4v2.0h-1.4zM16.9 696.3h1.4v2.0h-1.4zM36.5 696.3h1.4v2.0h-1.4zM18.3 699.1h1.4v2.0h-1.4zM39.3 699.1h1.4v2.0h-1.4zM16.9 701.8h1.4v2.0h-1.4zM36.5 701.8h1.4v2.0h-1.4zM7.1 704.6h1.4v2.0h-1.4z"/><path fill="#dcdcaa" opacity="0.42" d="M16.9 3.3h12.6v2.0h-12.6zM44.9 3.3h12.6v2.0h-12.6zM42.1 86.5h7.0v2.0h-7.0zM43.5 92.0h5.6v2.0h-5.6zM16.9 97.5h16.8v2.0h-16.8zM49.1 97.5h16.8v2.0h-16.8zM56.1 100.3h9.8v2.0h-9.8zM44.9 108.6h7.0v2.0h-7.0zM16.9 119.7h12.6v2.0h-12.6zM44.9 119.7h12.6v2.0h-12.6zM44.9 122.5h12.6v2.0h-12.6zM40.7 125.3h9.8v2.0h-9.8zM16.9 136.4h12.6v2.0h-12.6zM44.9 136.4h12.6v2.0h-12.6zM64.5 139.1h9.8v2.0h-9.8zM16.9 144.7h9.8v2.0h-9.8zM42.1 144.7h9.8v2.0h-9.8zM61.7 147.4h9.8v2.0h-9.8zM25.3 194.6h5.6v2.0h-5.6zM26.7 205.7h5.6v2.0h-5.6zM46.3 214.0h5.6v2.0h-5.6zM44.9 216.7h5.6v2.0h-5.6zM26.7 222.3h5.6v2.0h-5.6zM39.3 225.1h4.2v2.0h-4.2zM30.9 241.7h5.6v2.0h-5.6zM32.3 252.8h5.6v2.0h-5.6zM56.1 255.6h8.4v2.0h-8.4zM44.9 258.3h4.2v2.0h-4.2zM44.9 261.1h4.2v2.0h-4.2zM32.3 266.6h5.6v2.0h-5.6zM44.9 269.4h4.2v2.0h-4.2zM40.7 280.5h5.6v2.0h-5.6zM39.3 283.3h5.6v2.0h-5.6zM33.7 299.9h19.6v2.0h-19.6zM44.9 311.0h4.2v2.0h-4.2zM61.7 319.3h5.6v2.0h-5.6zM18.3 352.6h5.6v2.0h-5.6zM37.9 358.1h2.8v2.0h-2.8zM42.1 366.4h5.6v2.0h-5.6zM39.3 374.7h4.2v2.0h-4.2zM35.1 383.1h26.6v2.0h-26.6zM35.1 385.8h22.4v2.0h-22.4zM22.5 388.6h1.4v2.0h-1.4zM36.5 388.6h15.4v2.0h-15.4zM42.1 399.7h5.6v2.0h-5.6zM39.3 408.0h4.2v2.0h-4.2zM35.1 413.6h26.6v2.0h-26.6zM35.1 416.3h22.4v2.0h-22.4zM22.5 419.1h1.4v2.0h-1.4zM36.5 419.1h11.2v2.0h-11.2zM30.9 421.9h16.8v2.0h-16.8zM23.9 433.0h22.4v2.0h-22.4zM32.3 441.3h14.0v2.0h-14.0zM50.5 449.6h7.0v2.0h-7.0zM32.3 466.2h12.6v2.0h-12.6zM25.3 474.5h14.0v2.0h-14.0zM36.5 488.4h16.8v2.0h-16.8zM36.5 493.9h16.8v2.0h-16.8zM30.9 502.3h21.0v2.0h-21.0zM30.9 505.0h19.6v2.0h-19.6zM40.7 521.7h12.6v2.0h-12.6zM43.5 532.8h11.2v2.0h-11.2zM43.5 535.5h12.6v2.0h-12.6zM56.1 538.3h9.8v2.0h-9.8zM25.3 541.1h19.6v2.0h-19.6zM25.3 543.8h12.6v2.0h-12.6zM22.5 549.4h5.6v2.0h-5.6zM47.7 568.8h7.0v2.0h-7.0zM30.9 574.3h16.8v2.0h-16.8zM19.7 585.4h21.0v2.0h-21.0zM19.7 588.2h19.6v2.0h-19.6zM32.3 596.5h16.8v2.0h-16.8zM18.3 602.1h16.8v2.0h-16.8zM32.3 610.4h16.8v2.0h-16.8zM18.3 615.9h16.8v2.0h-16.8zM32.3 624.2h16.8v2.0h-16.8zM18.3 627.0h16.8v2.0h-16.8zM32.3 635.3h16.8v2.0h-16.8zM19.7 665.8h16.8v2.0h-16.8zM19.7 685.2h16.8v2.0h-16.8zM35.1 688.0h12.6v2.0h-12.6zM36.5 693.5h5.6v2.0h-5.6zM18.3 696.3h15.4v2.0h-15.4zM19.7 699.1h16.8v2.0h-16.8zM18.3 701.8h14.0v2.0h-14.0z"/><path fill="#569cd6" opacity="0.42" d="M32.3 3.3h11.2v2.0h-11.2zM22.5 6.1h4.2v2.0h-4.2zM22.5 8.8h4.2v2.0h-4.2zM22.5 11.6h4.2v2.0h-4.2zM22.5 14.4h4.2v2.0h-4.2zM22.5 69.8h4.2v2.0h-4.2zM29.5 75.4h4.2v2.0h-4.2zM22.5 86.5h4.2v2.0h-4.2zM36.5 97.5h11.2v2.0h-11.2zM22.5 100.3h4.2v2.0h-4.2zM32.3 119.7h11.2v2.0h-11.2zM22.5 122.5h4.2v2.0h-4.2zM11.3 133.6h5.6v2.0h-5.6zM32.3 136.4h11.2v2.0h-11.2zM49.1 139.1h4.2v2.0h-4.2zM29.5 144.7h11.2v2.0h-11.2zM46.3 147.4h4.2v2.0h-4.2zM22.5 150.2h4.2v2.0h-4.2zM11.3 164.1h5.6v2.0h-5.6zM11.3 175.2h5.6v2.0h-5.6zM18.3 189.0h5.6v2.0h-5.6zM44.9 191.8h14.0v2.0h-14.0zM74.3 191.8h7.0v2.0h-7.0zM37.9 202.9h7.0v2.0h-7.0zM33.7 205.7h11.2v2.0h-11.2zM35.1 211.2h4.2v2.0h-4.2zM33.7 222.3h11.2v2.0h-11.2zM22.5 236.1h4.2v2.0h-4.2zM29.5 238.9h4.2v2.0h-4.2zM43.5 250.0h7.0v2.0h-7.0zM39.3 252.8h11.2v2.0h-11.2zM39.3 266.6h11.2v2.0h-11.2zM29.5 277.7h4.2v2.0h-4.2zM28.1 305.4h4.2v2.0h-4.2zM35.1 308.2h4.2v2.0h-4.2zM40.7 313.8h4.2v2.0h-4.2zM29.5 344.3h5.6v2.0h-5.6zM11.3 352.6h5.6v2.0h-5.6zM11.3 358.1h5.6v2.0h-5.6zM54.7 358.1h11.2v2.0h-11.2zM42.1 360.9h5.6v2.0h-5.6zM102.3 383.1h7.0v2.0h-7.0zM99.5 385.8h7.0v2.0h-7.0zM39.3 391.4h7.0v2.0h-7.0zM51.9 394.2h7.0v2.0h-7.0zM103.7 413.6h7.0v2.0h-7.0zM98.1 416.3h7.0v2.0h-7.0zM39.3 424.6h5.6v2.0h-5.6zM63.1 433.0h5.6v2.0h-5.6zM86.9 433.0h7.0v2.0h-7.0zM50.5 441.3h11.2v2.0h-11.2zM32.3 452.4h5.6v2.0h-5.6zM49.1 466.2h11.2v2.0h-11.2zM11.3 469.0h4.2v2.0h-4.2zM11.3 471.8h4.2v2.0h-4.2zM11.3 521.7h4.2v2.0h-4.2zM35.1 527.2h5.6v2.0h-5.6zM56.1 530.0h5.6v2.0h-5.6zM16.9 538.3h4.2v2.0h-4.2zM53.3 596.5h11.2v2.0h-11.2zM11.3 602.1h5.6v2.0h-5.6zM53.3 610.4h11.2v2.0h-11.2zM11.3 615.9h5.6v2.0h-5.6zM53.3 624.2h11.2v2.0h-11.2zM11.3 627.0h5.6v2.0h-5.6zM53.3 635.3h11.2v2.0h-11.2zM11.3 668.6h4.2v2.0h-4.2zM16.9 671.4h5.6v2.0h-5.6zM43.5 671.4h5.6v2.0h-5.6zM78.5 674.1h5.6v2.0h-5.6zM50.5 690.8h7.0v2.0h-7.0zM11.3 696.3h5.6v2.0h-5.6zM11.3 701.8h5.6v2.0h-5.6z"/><path fill="#ffd700" opacity="0.42" d="M57.5 3.3h1.4v2.0h-1.4zM58.9 3.3h1.4v2.0h-1.4zM61.7 3.3h1.4v2.0h-1.4zM64.5 11.6h1.4v2.0h-1.4zM79.9 11.6h1.4v2.0h-1.4zM26.7 19.9h1.4v2.0h-1.4zM46.3 19.9h1.4v2.0h-1.4zM49.1 19.9h1.4v2.0h-1.4zM26.7 58.7h1.4v2.0h-1.4zM36.5 58.7h1.4v2.0h-1.4zM39.3 58.7h1.4v2.0h-1.4zM28.1 75.4h1.4v2.0h-1.4zM70.1 75.4h1.4v2.0h-1.4zM72.9 75.4h1.4v2.0h-1.4zM65.9 78.1h1.4v2.0h-1.4zM71.5 78.1h1.4v2.0h-1.4zM49.1 86.5h1.4v2.0h-1.4zM72.9 86.5h1.4v2.0h-1.4zM49.1 92.0h1.4v2.0h-1.4zM56.1 92.0h1.4v2.0h-1.4zM65.9 97.5h1.4v2.0h-1.4zM67.3 97.5h1.4v2.0h-1.4zM70.1 97.5h1.4v2.0h-1.4zM65.9 100.3h1.4v2.0h-1.4zM78.5 100.3h1.4v2.0h-1.4zM26.7 105.9h1.4v2.0h-1.4zM33.7 105.9h1.4v2.0h-1.4zM36.5 105.9h1.4v2.0h-1.4zM51.9 108.6h1.4v2.0h-1.4zM58.9 108.6h1.4v2.0h-1.4zM57.5 119.7h1.4v2.0h-1.4zM58.9 119.7h1.4v2.0h-1.4zM61.7 119.7h1.4v2.0h-1.4zM57.5 122.5h1.4v2.0h-1.4zM75.7 122.5h1.4v2.0h-1.4zM50.5 125.3h1.4v2.0h-1.4zM71.5 125.3h1.4v2.0h-1.4zM33.7 133.6h1.4v2.0h-1.4zM57.5 136.4h1.4v2.0h-1.4zM58.9 136.4h1.4v2.0h-1.4zM61.7 136.4h1.4v2.0h-1.4zM60.3 139.1h1.4v2.0h-1.4zM61.7 139.1h1.4v2.0h-1.4zM74.3 139.1h1.4v2.0h-1.4zM75.7 139.1h1.4v2.0h-1.4zM51.9 144.7h1.4v2.0h-1.4zM53.3 144.7h1.4v2.0h-1.4zM56.1 144.7h1.4v2.0h-1.4zM57.5 147.4h1.4v2.0h-1.4zM58.9 147.4h1.4v2.0h-1.4zM71.5 147.4h1.4v2.0h-1.4zM72.9 147.4h1.4v2.0h-1.4zM37.9 150.2h1.4v2.0h-1.4zM85.5 150.2h1.4v2.0h-1.4zM30.9 164.1h1.4v2.0h-1.4zM29.5 169.6h1.4v2.0h-1.4zM30.9 169.6h1.4v2.0h-1.4zM28.1 175.2h1.4v2.0h-1.4zM15.5 189.0h1.4v2.0h-1.4zM42.1 189.0h1.4v2.0h-1.4zM44.9 189.0h1.4v2.0h-1.4zM21.1 191.8h1.4v2.0h-1.4zM81.3 191.8h1.4v2.0h-1.4zM84.1 191.8h1.4v2.0h-1.4zM30.9 194.6h1.4v2.0h-1.4zM33.7 211.2h1.4v2.0h-1.4zM81.3 211.2h1.4v2.0h-1.4zM84.1 211.2h1.4v2.0h-1.4zM51.9 214.0h1.4v2.0h-1.4zM65.9 214.0h1.4v2.0h-1.4zM50.5 216.7h1.4v2.0h-1.4zM64.5 216.7h1.4v2.0h-1.4zM43.5 225.1h1.4v2.0h-1.4zM50.5 225.1h1.4v2.0h-1.4zM35.1 233.4h1.4v2.0h-1.4zM36.5 233.4h1.4v2.0h-1.4zM28.1 238.9h1.4v2.0h-1.4zM61.7 238.9h1.4v2.0h-1.4zM64.5 238.9h1.4v2.0h-1.4zM36.5 241.7h1.4v2.0h-1.4zM61.7 244.5h1.4v2.0h-1.4zM64.5 244.5h1.4v2.0h-1.4zM64.5 255.6h1.4v2.0h-1.4zM75.7 255.6h1.4v2.0h-1.4zM49.1 258.3h1.4v2.0h-1.4zM58.9 258.3h1.4v2.0h-1.4zM49.1 261.1h1.4v2.0h-1.4zM61.7 261.1h1.4v2.0h-1.4zM49.1 269.4h1.4v2.0h-1.4zM56.1 269.4h1.4v2.0h-1.4zM28.1 277.7h1.4v2.0h-1.4zM75.7 277.7h1.4v2.0h-1.4zM78.5 277.7h1.4v2.0h-1.4zM46.3 280.5h1.4v2.0h-1.4zM60.3 280.5h1.4v2.0h-1.4zM44.9 283.3h1.4v2.0h-1.4zM58.9 283.3h1.4v2.0h-1.4zM21.1 299.9h1.4v2.0h-1.4zM67.3 299.9h1.4v2.0h-1.4zM70.1 299.9h1.4v2.0h-1.4zM26.7 302.7h1.4v2.0h-1.4zM57.5 302.7h1.4v2.0h-1.4zM60.3 302.7h1.4v2.0h-1.4zM53.3 305.4h1.4v2.0h-1.4zM54.7 305.4h1.4v2.0h-1.4zM33.7 308.2h1.4v2.0h-1.4zM92.5 308.2h1.4v2.0h-1.4zM95.3 308.2h1.4v2.0h-1.4zM49.1 311.0h1.4v2.0h-1.4zM74.3 311.0h1.4v2.0h-1.4zM39.3 313.8h1.4v2.0h-1.4zM86.9 313.8h1.4v2.0h-1.4zM89.7 313.8h1.4v2.0h-1.4zM43.5 316.5h1.4v2.0h-1.4zM91.1 316.5h1.4v2.0h-1.4zM93.9 316.5h1.4v2.0h-1.4zM67.3 319.3h1.4v2.0h-1.4zM81.3 319.3h1.4v2.0h-1.4zM23.9 352.6h1.4v2.0h-1.4zM25.3 352.6h1.4v2.0h-1.4zM40.7 358.1h1.4v2.0h-1.4zM21.1 360.9h1.4v2.0h-1.4zM47.7 360.9h1.4v2.0h-1.4zM50.5 360.9h1.4v2.0h-1.4zM28.1 363.7h1.4v2.0h-1.4zM47.7 366.4h1.4v2.0h-1.4zM96.7 366.4h1.4v2.0h-1.4zM30.9 372.0h1.4v2.0h-1.4zM33.7 372.0h1.4v2.0h-1.4zM36.5 372.0h1.4v2.0h-1.4zM43.5 374.7h1.4v2.0h-1.4zM46.3 374.7h1.4v2.0h-1.4zM61.7 383.1h1.4v2.0h-1.4zM109.3 383.1h1.4v2.0h-1.4zM57.5 385.8h1.4v2.0h-1.4zM106.5 385.8h1.4v2.0h-1.4zM23.9 388.6h1.4v2.0h-1.4zM33.7 388.6h1.4v2.0h-1.4zM51.9 388.6h1.4v2.0h-1.4zM72.9 388.6h1.4v2.0h-1.4zM28.1 396.9h1.4v2.0h-1.4zM47.7 399.7h1.4v2.0h-1.4zM99.5 399.7h1.4v2.0h-1.4zM30.9 405.2h1.4v2.0h-1.4zM33.7 405.2h1.4v2.0h-1.4zM36.5 405.2h1.4v2.0h-1.4zM43.5 408.0h1.4v2.0h-1.4zM46.3 408.0h1.4v2.0h-1.4zM61.7 413.6h1.4v2.0h-1.4zM110.7 413.6h1.4v2.0h-1.4zM57.5 416.3h1.4v2.0h-1.4zM105.1 416.3h1.4v2.0h-1.4zM23.9 419.1h1.4v2.0h-1.4zM33.7 419.1h1.4v2.0h-1.4zM47.7 419.1h1.4v2.0h-1.4zM68.7 419.1h1.4v2.0h-1.4zM47.7 421.9h1.4v2.0h-1.4zM49.1 421.9h1.4v2.0h-1.4zM46.3 433.0h1.4v2.0h-1.4zM93.9 433.0h1.4v2.0h-1.4zM63.1 441.3h1.4v2.0h-1.4zM71.5 441.3h1.4v2.0h-1.4zM74.3 441.3h1.4v2.0h-1.4zM15.5 444.0h1.4v2.0h-1.4zM43.5 444.0h1.4v2.0h-1.4zM46.3 444.0h1.4v2.0h-1.4zM21.1 446.8h1.4v2.0h-1.4zM65.9 446.8h1.4v2.0h-1.4zM68.7 446.8h1.4v2.0h-1.4zM57.5 449.6h1.4v2.0h-1.4zM58.9 449.6h1.4v2.0h-1.4zM61.7 466.2h1.4v2.0h-1.4zM70.1 466.2h1.4v2.0h-1.4zM72.9 466.2h1.4v2.0h-1.4zM15.5 474.5h1.4v2.0h-1.4zM49.1 474.5h1.4v2.0h-1.4zM15.5 480.1h1.4v2.0h-1.4zM51.9 480.1h1.4v2.0h-1.4zM54.7 480.1h1.4v2.0h-1.4zM21.1 482.9h1.4v2.0h-1.4zM40.7 482.9h1.4v2.0h-1.4zM43.5 482.9h1.4v2.0h-1.4zM26.7 485.6h1.4v2.0h-1.4zM86.9 485.6h1.4v2.0h-1.4zM89.7 485.6h1.4v2.0h-1.4zM53.3 488.4h1.4v2.0h-1.4zM54.7 488.4h1.4v2.0h-1.4zM53.3 493.9h1.4v2.0h-1.4zM54.7 493.9h1.4v2.0h-1.4zM51.9 502.3h1.4v2.0h-1.4zM53.3 502.3h1.4v2.0h-1.4zM50.5 505.0h1.4v2.0h-1.4zM51.9 505.0h1.4v2.0h-1.4zM53.3 521.7h1.4v2.0h-1.4zM107.9 521.7h1.4v2.0h-1.4zM15.5 527.2h1.4v2.0h-1.4zM40.7 527.2h1.4v2.0h-1.4zM43.5 527.2h1.4v2.0h-1.4zM54.7 532.8h1.4v2.0h-1.4zM58.9 532.8h1.4v2.0h-1.4zM56.1 535.5h1.4v2.0h-1.4zM57.5 535.5h1.4v2.0h-1.4zM65.9 538.3h1.4v2.0h-1.4zM67.3 538.3h1.4v2.0h-1.4zM44.9 541.1h1.4v2.0h-1.4zM121.9 541.1h1.4v2.0h-1.4zM37.9 543.8h1.4v2.0h-1.4zM39.3 543.8h1.4v2.0h-1.4zM22.5 546.6h1.4v2.0h-1.4zM28.1 549.4h1.4v2.0h-1.4zM64.5 549.4h1.4v2.0h-1.4zM25.3 554.9h1.4v2.0h-1.4zM28.1 554.9h1.4v2.0h-1.4zM30.9 554.9h1.4v2.0h-1.4zM21.1 566.0h1.4v2.0h-1.4zM54.7 566.0h1.4v2.0h-1.4zM57.5 566.0h1.4v2.0h-1.4zM54.7 568.8h1.4v2.0h-1.4zM56.1 568.8h1.4v2.0h-1.4zM47.7 574.3h1.4v2.0h-1.4zM49.1 574.3h1.4v2.0h-1.4zM40.7 585.4h1.4v2.0h-1.4zM42.1 585.4h1.4v2.0h-1.4zM39.3 588.2h1.4v2.0h-1.4zM40.7 588.2h1.4v2.0h-1.4zM65.9 596.5h1.4v2.0h-1.4zM67.3 596.5h1.4v2.0h-1.4zM70.1 596.5h1.4v2.0h-1.4zM35.1 602.1h1.4v2.0h-1.4zM36.5 602.1h1.4v2.0h-1.4zM65.9 610.4h1.4v2.0h-1.4zM67.3 610.4h1.4v2.0h-1.4zM70.1 610.4h1.4v2.0h-1.4zM35.1 615.9h1.4v2.0h-1.4zM36.5 615.9h1.4v2.0h-1.4zM65.9 624.2h1.4v2.0h-1.4zM67.3 624.2h1.4v2.0h-1.4zM70.1 624.2h1.4v2.0h-1.4zM35.1 627.0h1.4v2.0h-1.4zM36.5 627.0h1.4v2.0h-1.4zM65.9 635.3h1.4v2.0h-1.4zM67.3 635.3h1.4v2.0h-1.4zM70.1 635.3h1.4v2.0h-1.4zM15.5 638.1h1.4v2.0h-1.4zM49.1 638.1h1.4v2.0h-1.4zM51.9 638.1h1.4v2.0h-1.4zM15.5 649.2h1.4v2.0h-1.4zM56.1 649.2h1.4v2.0h-1.4zM58.9 649.2h1.4v2.0h-1.4zM35.1 660.3h1.4v2.0h-1.4zM36.5 660.3h1.4v2.0h-1.4zM36.5 663.0h1.4v2.0h-1.4zM37.9 663.0h1.4v2.0h-1.4zM36.5 665.8h1.4v2.0h-1.4zM81.3 665.8h1.4v2.0h-1.4zM15.5 671.4h1.4v2.0h-1.4zM67.3 671.4h1.4v2.0h-1.4zM70.1 671.4h1.4v2.0h-1.4zM33.7 674.1h1.4v2.0h-1.4zM61.7 674.1h1.4v2.0h-1.4zM63.1 674.1h1.4v2.0h-1.4zM91.1 674.1h1.4v2.0h-1.4zM33.7 679.7h1.4v2.0h-1.4zM61.7 679.7h1.4v2.0h-1.4zM36.5 685.2h1.4v2.0h-1.4zM42.1 685.2h1.4v2.0h-1.4zM47.7 688.0h1.4v2.0h-1.4zM49.1 688.0h1.4v2.0h-1.4zM42.1 693.5h1.4v2.0h-1.4zM43.5 693.5h1.4v2.0h-1.4zM33.7 696.3h1.4v2.0h-1.4zM35.1 696.3h1.4v2.0h-1.4zM36.5 699.1h1.4v2.0h-1.4zM37.9 699.1h1.4v2.0h-1.4zM32.3 701.8h1.4v2.0h-1.4zM35.1 701.8h1.4v2.0h-1.4z"/><path fill="#9cdcfe" opacity="0.42" d="M28.1 6.1h5.6v2.0h-5.6zM28.1 8.8h5.6v2.0h-5.6zM37.9 8.8h7.0v2.0h-7.0zM46.3 8.8h8.4v2.0h-8.4zM56.1 8.8h5.6v2.0h-5.6zM65.9 8.8h7.0v2.0h-7.0zM74.3 8.8h8.4v2.0h-8.4zM84.1 8.8h5.6v2.0h-5.6zM28.1 11.6h7.0v2.0h-7.0zM39.3 11.6h7.0v2.0h-7.0zM47.7 11.6h8.4v2.0h-8.4zM57.5 11.6h7.0v2.0h-7.0zM65.9 11.6h7.0v2.0h-7.0zM74.3 11.6h5.6v2.0h-5.6zM28.1 14.4h11.2v2.0h-11.2zM28.1 19.9h7.0v2.0h-7.0zM28.1 22.7h11.2v2.0h-11.2zM37.9 25.5h7.0v2.0h-7.0zM28.1 28.2h11.2v2.0h-11.2zM37.9 31.0h7.0v2.0h-7.0zM28.1 33.8h11.2v2.0h-11.2zM37.9 36.6h7.0v2.0h-7.0zM28.1 39.3h11.2v2.0h-11.2zM37.9 42.1h7.0v2.0h-7.0zM28.1 44.9h11.2v2.0h-11.2zM28.1 50.4h11.2v2.0h-11.2zM29.5 58.7h7.0v2.0h-7.0zM28.1 61.5h7.0v2.0h-7.0zM28.1 69.8h7.0v2.0h-7.0zM35.1 75.4h4.2v2.0h-4.2zM44.9 75.4h7.0v2.0h-7.0zM53.3 75.4h8.4v2.0h-8.4zM63.1 75.4h7.0v2.0h-7.0zM28.1 78.1h7.0v2.0h-7.0zM40.7 78.1h7.0v2.0h-7.0zM49.1 78.1h8.4v2.0h-8.4zM58.9 78.1h7.0v2.0h-7.0zM67.3 78.1h4.2v2.0h-4.2zM28.1 86.5h2.8v2.0h-2.8zM50.5 86.5h7.0v2.0h-7.0zM22.5 89.2h5.6v2.0h-5.6zM22.5 92.0h7.0v2.0h-7.0zM30.9 92.0h2.8v2.0h-2.8zM35.1 92.0h7.0v2.0h-7.0zM50.5 92.0h5.6v2.0h-5.6zM28.1 100.3h5.6v2.0h-5.6zM37.9 100.3h16.8v2.0h-16.8zM28.1 105.9h5.6v2.0h-5.6zM28.1 108.6h5.6v2.0h-5.6zM53.3 108.6h5.6v2.0h-5.6zM28.1 111.4h7.0v2.0h-7.0zM36.5 111.4h8.4v2.0h-8.4zM49.1 111.4h5.6v2.0h-5.6zM28.1 122.5h5.6v2.0h-5.6zM58.9 122.5h7.0v2.0h-7.0zM67.3 122.5h8.4v2.0h-8.4zM22.5 125.3h16.8v2.0h-16.8zM65.9 125.3h5.6v2.0h-5.6zM18.3 133.6h11.2v2.0h-11.2zM22.5 139.1h7.0v2.0h-7.0zM30.9 139.1h5.6v2.0h-5.6zM37.9 139.1h7.0v2.0h-7.0zM22.5 147.4h7.0v2.0h-7.0zM30.9 147.4h5.6v2.0h-5.6zM37.9 147.4h4.2v2.0h-4.2zM28.1 150.2h5.6v2.0h-5.6zM39.3 150.2h7.0v2.0h-7.0zM47.7 150.2h5.6v2.0h-5.6zM54.7 150.2h4.2v2.0h-4.2zM63.1 150.2h7.0v2.0h-7.0zM71.5 150.2h5.6v2.0h-5.6zM78.5 150.2h7.0v2.0h-7.0zM32.3 153.0h5.6v2.0h-5.6zM18.3 164.1h8.4v2.0h-8.4zM18.3 175.2h5.6v2.0h-5.6zM16.9 177.9h7.0v2.0h-7.0zM16.9 180.7h4.2v2.0h-4.2zM25.3 189.0h16.8v2.0h-16.8zM22.5 191.8h9.8v2.0h-9.8zM33.7 191.8h9.8v2.0h-9.8zM22.5 194.6h1.4v2.0h-1.4zM28.1 197.3h4.2v2.0h-4.2zM35.1 197.3h9.8v2.0h-9.8zM46.3 197.3h9.8v2.0h-9.8zM28.1 200.1h5.6v2.0h-5.6zM28.1 202.9h7.0v2.0h-7.0zM47.7 205.7h9.8v2.0h-9.8zM28.1 208.4h8.4v2.0h-8.4zM40.7 208.4h9.8v2.0h-9.8zM40.7 211.2h1.4v2.0h-1.4zM50.5 211.2h1.4v2.0h-1.4zM56.1 211.2h8.4v2.0h-8.4zM65.9 211.2h8.4v2.0h-8.4zM77.1 211.2h1.4v2.0h-1.4zM33.7 214.0h11.2v2.0h-11.2zM53.3 214.0h8.4v2.0h-8.4zM63.1 214.0h1.4v2.0h-1.4zM33.7 216.7h9.8v2.0h-9.8zM51.9 216.7h8.4v2.0h-8.4zM61.7 216.7h1.4v2.0h-1.4zM47.7 222.3h5.6v2.0h-5.6zM28.1 225.1h9.8v2.0h-9.8zM44.9 225.1h5.6v2.0h-5.6zM22.5 233.4h8.4v2.0h-8.4zM28.1 236.1h4.2v2.0h-4.2zM36.5 236.1h9.8v2.0h-9.8zM47.7 236.1h9.8v2.0h-9.8zM58.9 236.1h8.4v2.0h-8.4zM35.1 238.9h1.4v2.0h-1.4zM44.9 238.9h1.4v2.0h-1.4zM50.5 238.9h4.2v2.0h-4.2zM57.5 238.9h1.4v2.0h-1.4zM28.1 241.7h1.4v2.0h-1.4zM33.7 244.5h4.2v2.0h-4.2zM40.7 244.5h9.8v2.0h-9.8zM51.9 244.5h9.8v2.0h-9.8zM63.1 244.5h1.4v2.0h-1.4zM33.7 247.2h5.6v2.0h-5.6zM33.7 250.0h7.0v2.0h-7.0zM53.3 252.8h9.8v2.0h-9.8zM33.7 255.6h8.4v2.0h-8.4zM46.3 255.6h8.4v2.0h-8.4zM65.9 255.6h9.8v2.0h-9.8zM33.7 258.3h9.8v2.0h-9.8zM50.5 258.3h8.4v2.0h-8.4zM33.7 261.1h9.8v2.0h-9.8zM50.5 261.1h11.2v2.0h-11.2zM53.3 266.6h5.6v2.0h-5.6zM33.7 269.4h9.8v2.0h-9.8zM50.5 269.4h5.6v2.0h-5.6zM35.1 277.7h1.4v2.0h-1.4zM44.9 277.7h1.4v2.0h-1.4zM50.5 277.7h8.4v2.0h-8.4zM60.3 277.7h8.4v2.0h-8.4zM71.5 277.7h1.4v2.0h-1.4zM28.1 280.5h11.2v2.0h-11.2zM47.7 280.5h8.4v2.0h-8.4zM57.5 280.5h1.4v2.0h-1.4zM28.1 283.3h9.8v2.0h-9.8zM46.3 283.3h8.4v2.0h-8.4zM56.1 283.3h1.4v2.0h-1.4zM22.5 299.9h9.8v2.0h-9.8zM28.1 302.7h9.8v2.0h-9.8zM39.3 302.7h8.4v2.0h-8.4zM33.7 305.4h15.4v2.0h-15.4zM40.7 308.2h1.4v2.0h-1.4zM50.5 308.2h1.4v2.0h-1.4zM56.1 308.2h9.8v2.0h-9.8zM67.3 308.2h8.4v2.0h-8.4zM77.1 308.2h8.4v2.0h-8.4zM88.3 308.2h1.4v2.0h-1.4zM33.7 311.0h9.8v2.0h-9.8zM50.5 311.0h9.8v2.0h-9.8zM61.7 311.0h8.4v2.0h-8.4zM71.5 311.0h1.4v2.0h-1.4zM46.3 313.8h1.4v2.0h-1.4zM56.1 313.8h1.4v2.0h-1.4zM61.7 313.8h8.4v2.0h-8.4zM71.5 313.8h8.4v2.0h-8.4zM82.7 313.8h1.4v2.0h-1.4zM44.9 316.5h8.4v2.0h-8.4zM54.7 316.5h1.4v2.0h-1.4zM58.9 316.5h2.8v2.0h-2.8zM67.3 316.5h9.8v2.0h-9.8zM78.5 316.5h8.4v2.0h-8.4zM88.3 316.5h1.4v2.0h-1.4zM44.9 319.3h15.4v2.0h-15.4zM68.7 319.3h8.4v2.0h-8.4zM78.5 319.3h1.4v2.0h-1.4zM28.1 333.2h8.4v2.0h-8.4zM40.7 333.2h15.4v2.0h-15.4zM16.9 344.3h8.4v2.0h-8.4zM36.5 344.3h14.0v2.0h-14.0zM18.3 358.1h2.8v2.0h-2.8zM22.5 358.1h14.0v2.0h-14.0zM22.5 360.9h12.6v2.0h-12.6zM28.1 366.4h12.6v2.0h-12.6zM32.3 372.0h1.4v2.0h-1.4zM28.1 374.7h9.8v2.0h-9.8zM44.9 374.7h1.4v2.0h-1.4zM22.5 383.1h11.2v2.0h-11.2zM78.5 383.1h7.0v2.0h-7.0zM86.9 383.1h12.6v2.0h-12.6zM22.5 385.8h11.2v2.0h-11.2zM74.3 385.8h7.0v2.0h-7.0zM82.7 385.8h14.0v2.0h-14.0zM22.5 391.4h12.6v2.0h-12.6zM32.3 394.2h12.6v2.0h-12.6zM28.1 399.7h12.6v2.0h-12.6zM32.3 405.2h1.4v2.0h-1.4zM28.1 408.0h9.8v2.0h-9.8zM44.9 408.0h1.4v2.0h-1.4zM22.5 413.6h11.2v2.0h-11.2zM78.5 413.6h7.0v2.0h-7.0zM86.9 413.6h14.0v2.0h-14.0zM22.5 416.3h11.2v2.0h-11.2zM74.3 416.3h7.0v2.0h-7.0zM82.7 416.3h12.6v2.0h-12.6zM22.5 421.9h7.0v2.0h-7.0zM22.5 424.6h12.6v2.0h-12.6zM11.3 433.0h11.2v2.0h-11.2zM70.1 433.0h14.0v2.0h-14.0zM18.3 441.3h12.6v2.0h-12.6zM64.5 441.3h7.0v2.0h-7.0zM16.9 444.0h7.0v2.0h-7.0zM25.3 444.0h9.8v2.0h-9.8zM22.5 446.8h7.0v2.0h-7.0zM30.9 446.8h9.8v2.0h-9.8zM46.3 446.8h7.0v2.0h-7.0zM54.7 446.8h11.2v2.0h-11.2zM22.5 449.6h7.0v2.0h-7.0zM30.9 449.6h2.8v2.0h-2.8zM35.1 449.6h14.0v2.0h-14.0zM18.3 466.2h12.6v2.0h-12.6zM63.1 466.2h7.0v2.0h-7.0zM16.9 469.0h4.2v2.0h-4.2zM25.3 469.0h7.0v2.0h-7.0zM33.7 469.0h4.2v2.0h-4.2zM16.9 471.8h9.8v2.0h-9.8zM30.9 471.8h7.0v2.0h-7.0zM39.3 471.8h9.8v2.0h-9.8zM16.9 474.5h7.0v2.0h-7.0zM40.7 474.5h7.0v2.0h-7.0zM16.9 480.1h7.0v2.0h-7.0zM25.3 480.1h8.4v2.0h-8.4zM35.1 480.1h16.8v2.0h-16.8zM22.5 482.9h9.8v2.0h-9.8zM29.5 485.6h7.0v2.0h-7.0zM37.9 485.6h9.8v2.0h-9.8zM49.1 485.6h7.0v2.0h-7.0zM63.1 485.6h7.0v2.0h-7.0zM71.5 485.6h5.6v2.0h-5.6zM78.5 485.6h8.4v2.0h-8.4zM28.1 488.4h7.0v2.0h-7.0zM28.1 493.9h7.0v2.0h-7.0zM22.5 502.3h7.0v2.0h-7.0zM22.5 505.0h7.0v2.0h-7.0zM16.9 521.7h11.2v2.0h-11.2zM32.3 521.7h7.0v2.0h-7.0zM54.7 521.7h8.4v2.0h-8.4zM64.5 521.7h7.0v2.0h-7.0zM72.9 521.7h18.2v2.0h-18.2zM100.9 521.7h7.0v2.0h-7.0zM16.9 527.2h11.2v2.0h-11.2zM16.9 530.0h7.0v2.0h-7.0zM25.3 530.0h8.4v2.0h-8.4zM35.1 530.0h16.8v2.0h-16.8zM16.9 532.8h7.0v2.0h-7.0zM25.3 532.8h16.8v2.0h-16.8zM16.9 535.5h7.0v2.0h-7.0zM25.3 535.5h16.8v2.0h-16.8zM22.5 538.3h5.6v2.0h-5.6zM32.3 538.3h7.0v2.0h-7.0zM40.7 538.3h14.0v2.0h-14.0zM16.9 541.1h7.0v2.0h-7.0zM46.3 541.1h8.4v2.0h-8.4zM56.1 541.1h7.0v2.0h-7.0zM64.5 541.1h18.2v2.0h-18.2zM86.9 541.1h5.6v2.0h-5.6zM95.3 541.1h7.0v2.0h-7.0zM103.7 541.1h9.8v2.0h-9.8zM114.9 541.1h7.0v2.0h-7.0zM16.9 543.8h7.0v2.0h-7.0zM26.7 554.9h1.4v2.0h-1.4zM22.5 566.0h7.0v2.0h-7.0zM30.9 566.0h5.6v2.0h-5.6zM37.9 566.0h16.8v2.0h-16.8zM22.5 568.8h7.0v2.0h-7.0zM30.9 568.8h2.8v2.0h-2.8zM35.1 568.8h11.2v2.0h-11.2zM22.5 574.3h7.0v2.0h-7.0zM11.3 585.4h7.0v2.0h-7.0zM11.3 588.2h7.0v2.0h-7.0zM18.3 596.5h12.6v2.0h-12.6zM11.3 599.3h7.0v2.0h-7.0zM19.7 599.3h18.2v2.0h-18.2zM18.3 610.4h12.6v2.0h-12.6zM11.3 613.1h7.0v2.0h-7.0zM19.7 613.1h18.2v2.0h-18.2zM18.3 624.2h12.6v2.0h-12.6zM18.3 635.3h12.6v2.0h-12.6zM16.9 638.1h7.0v2.0h-7.0zM25.3 638.1h18.2v2.0h-18.2zM16.9 640.9h7.0v2.0h-7.0zM25.3 640.9h18.2v2.0h-18.2zM47.7 640.9h8.4v2.0h-8.4zM57.5 640.9h8.4v2.0h-8.4zM18.3 649.2h8.4v2.0h-8.4zM28.1 649.2h7.0v2.0h-7.0zM36.5 649.2h18.2v2.0h-18.2zM16.9 651.9h7.0v2.0h-7.0zM25.3 651.9h18.2v2.0h-18.2zM11.3 660.3h7.0v2.0h-7.0zM19.7 660.3h11.2v2.0h-11.2zM11.3 663.0h7.0v2.0h-7.0zM19.7 663.0h12.6v2.0h-12.6zM11.3 665.8h7.0v2.0h-7.0zM37.9 665.8h8.4v2.0h-8.4zM47.7 665.8h7.0v2.0h-7.0zM56.1 665.8h18.2v2.0h-18.2zM16.9 668.6h4.2v2.0h-4.2zM23.9 671.4h5.6v2.0h-5.6zM50.5 671.4h5.6v2.0h-5.6zM16.9 674.1h4.2v2.0h-4.2zM25.3 674.1h8.4v2.0h-8.4zM35.1 674.1h7.0v2.0h-7.0zM43.5 674.1h18.2v2.0h-18.2zM85.5 674.1h5.6v2.0h-5.6zM16.9 679.7h4.2v2.0h-4.2zM25.3 679.7h8.4v2.0h-8.4zM35.1 679.7h7.0v2.0h-7.0zM43.5 679.7h18.2v2.0h-18.2zM64.5 679.7h5.6v2.0h-5.6zM11.3 685.2h7.0v2.0h-7.0zM37.9 685.2h4.2v2.0h-4.2zM11.3 688.0h7.0v2.0h-7.0zM19.7 688.0h14.0v2.0h-14.0zM11.3 690.8h7.0v2.0h-7.0zM19.7 690.8h8.4v2.0h-8.4zM29.5 690.8h16.8v2.0h-16.8zM11.3 693.5h7.0v2.0h-7.0zM19.7 693.5h2.8v2.0h-2.8zM23.9 693.5h11.2v2.0h-11.2zM11.3 699.1h7.0v2.0h-7.0z"/><path fill="#ce9178" opacity="0.42" d="M37.9 6.1h2.8v2.0h-2.8zM93.9 8.8h4.2v2.0h-4.2zM99.5 8.8h7.0v2.0h-7.0zM43.5 14.4h2.8v2.0h-2.8zM43.5 22.7h9.8v2.0h-9.8zM43.5 28.2h8.4v2.0h-8.4zM43.5 33.8h7.0v2.0h-7.0zM43.5 39.3h5.6v2.0h-5.6zM43.5 44.9h4.2v2.0h-4.2zM43.5 50.4h8.4v2.0h-8.4zM33.7 89.2h4.2v2.0h-4.2zM60.3 89.2h5.6v2.0h-5.6zM67.3 89.2h22.4v2.0h-22.4zM112.1 89.2h5.6v2.0h-5.6zM119.1 89.2h25.2v2.0h-25.2zM67.3 100.3h11.2v2.0h-11.2zM51.9 125.3h11.2v2.0h-11.2zM16.9 166.8h8.4v2.0h-8.4zM28.1 166.8h4.2v2.0h-4.2zM33.7 166.8h7.0v2.0h-7.0zM16.9 169.6h9.8v2.0h-9.8zM36.5 200.1h7.0v2.0h-7.0zM42.1 247.2h7.0v2.0h-7.0zM54.7 299.9h11.2v2.0h-11.2zM42.1 358.1h9.8v2.0h-9.8zM51.9 366.4h16.8v2.0h-16.8zM71.5 366.4h22.4v2.0h-22.4zM63.1 383.1h12.6v2.0h-12.6zM58.9 385.8h12.6v2.0h-12.6zM25.3 388.6h8.4v2.0h-8.4zM53.3 388.6h19.6v2.0h-19.6zM51.9 399.7h16.8v2.0h-16.8zM71.5 399.7h25.2v2.0h-25.2zM63.1 413.6h12.6v2.0h-12.6zM58.9 416.3h12.6v2.0h-12.6zM25.3 419.1h8.4v2.0h-8.4zM49.1 419.1h19.6v2.0h-19.6zM47.7 433.0h12.6v2.0h-12.6zM29.5 549.4h9.8v2.0h-9.8zM42.1 549.4h22.4v2.0h-22.4zM25.3 668.6h2.8v2.0h-2.8zM35.1 671.4h2.8v2.0h-2.8zM61.7 671.4h5.6v2.0h-5.6zM64.5 674.1h9.8v2.0h-9.8z"/><path fill="#c586c0" opacity="0.42" d="M22.5 19.9h2.8v2.0h-2.8zM25.3 25.5h5.6v2.0h-5.6zM32.3 25.5h2.8v2.0h-2.8zM25.3 31.0h5.6v2.0h-5.6zM32.3 31.0h2.8v2.0h-2.8zM25.3 36.6h5.6v2.0h-5.6zM32.3 36.6h2.8v2.0h-2.8zM25.3 42.1h5.6v2.0h-5.6zM32.3 42.1h2.8v2.0h-2.8zM25.3 47.7h5.6v2.0h-5.6zM22.5 58.7h2.8v2.0h-2.8zM22.5 75.4h4.2v2.0h-4.2zM40.7 75.4h2.8v2.0h-2.8zM22.5 105.9h2.8v2.0h-2.8zM22.5 153.0h8.4v2.0h-8.4zM11.3 189.0h2.8v2.0h-2.8zM16.9 191.8h2.8v2.0h-2.8zM28.1 211.2h4.2v2.0h-4.2zM19.7 230.6h5.6v2.0h-5.6zM22.5 238.9h4.2v2.0h-4.2zM22.5 277.7h4.2v2.0h-4.2zM16.9 299.9h2.8v2.0h-2.8zM22.5 302.7h2.8v2.0h-2.8zM28.1 308.2h4.2v2.0h-4.2zM33.7 313.8h4.2v2.0h-4.2zM39.3 316.5h2.8v2.0h-2.8zM14.1 341.5h5.6v2.0h-5.6zM16.9 360.9h2.8v2.0h-2.8zM22.5 363.7h4.2v2.0h-4.2zM22.5 372.0h7.0v2.0h-7.0zM19.7 394.2h5.6v2.0h-5.6zM26.7 394.2h2.8v2.0h-2.8zM22.5 396.9h4.2v2.0h-4.2zM22.5 405.2h7.0v2.0h-7.0zM11.3 444.0h2.8v2.0h-2.8zM16.9 446.8h2.8v2.0h-2.8zM22.5 452.4h8.4v2.0h-8.4zM11.3 474.5h2.8v2.0h-2.8zM51.9 474.5h8.4v2.0h-8.4zM11.3 480.1h2.8v2.0h-2.8zM16.9 482.9h2.8v2.0h-2.8zM22.5 485.6h2.8v2.0h-2.8zM25.3 491.2h5.6v2.0h-5.6zM19.7 499.5h5.6v2.0h-5.6zM16.9 513.3h8.4v2.0h-8.4zM11.3 527.2h2.8v2.0h-2.8zM16.9 546.6h4.2v2.0h-4.2zM16.9 554.9h7.0v2.0h-7.0zM16.9 566.0h2.8v2.0h-2.8zM19.7 571.6h5.6v2.0h-5.6zM11.3 638.1h2.8v2.0h-2.8zM11.3 649.2h2.8v2.0h-2.8zM11.3 671.4h2.8v2.0h-2.8zM14.1 676.9h5.6v2.0h-5.6z"/><path fill="#b5cea8" opacity="0.42" d="M39.3 19.9h7.0v2.0h-7.0zM49.1 25.5h5.6v2.0h-5.6zM49.1 31.0h5.6v2.0h-5.6zM49.1 36.6h5.6v2.0h-5.6zM49.1 42.1h5.6v2.0h-5.6zM39.3 61.5h1.4v2.0h-1.4zM39.3 69.8h1.4v2.0h-1.4zM61.7 86.5h5.6v2.0h-5.6zM71.5 86.5h1.4v2.0h-1.4zM91.1 150.2h5.6v2.0h-5.6zM26.7 177.9h1.4v2.0h-1.4zM23.9 180.7h1.4v2.0h-1.4zM46.3 211.2h1.4v2.0h-1.4zM40.7 238.9h1.4v2.0h-1.4zM40.7 277.7h1.4v2.0h-1.4zM46.3 308.2h1.4v2.0h-1.4zM51.9 313.8h1.4v2.0h-1.4zM40.7 444.0h2.8v2.0h-2.8zM37.9 482.9h2.8v2.0h-2.8zM93.9 521.7h2.8v2.0h-2.8zM56.1 532.8h2.8v2.0h-2.8zM47.7 638.1h1.4v2.0h-1.4zM70.1 640.9h1.4v2.0h-1.4zM47.7 651.9h1.4v2.0h-1.4zM77.1 665.8h2.8v2.0h-2.8zM33.7 701.8h1.4v2.0h-1.4z"/><path fill="#4ec9b0" opacity="0.42" d="M35.1 86.5h5.6v2.0h-5.6zM37.9 108.6h5.6v2.0h-5.6zM37.9 122.5h5.6v2.0h-5.6zM54.7 139.1h5.6v2.0h-5.6zM51.9 147.4h5.6v2.0h-5.6zM60.3 191.8h7.0v2.0h-7.0zM5.7 441.3h11.2v2.0h-11.2zM5.7 466.2h11.2v2.0h-11.2zM5.7 596.5h11.2v2.0h-11.2zM5.7 610.4h11.2v2.0h-11.2zM5.7 624.2h11.2v2.0h-11.2zM5.7 635.3h11.2v2.0h-11.2z"/><path fill="#6a9955" opacity="0.42" d="M15.5 158.5h21.0v2.0h-21.0zM85.5 211.2h61.6v2.0h-61.6zM79.9 277.7h61.6v2.0h-61.6zM16.9 297.1h44.8v2.0h-44.8z"/><path fill="#da70d6" opacity="0.42" d="M32.3 194.6h1.4v2.0h-1.4zM23.9 205.7h1.4v2.0h-1.4zM32.3 205.7h1.4v2.0h-1.4zM61.7 214.0h1.4v2.0h-1.4zM64.5 214.0h1.4v2.0h-1.4zM60.3 216.7h1.4v2.0h-1.4zM63.1 216.7h1.4v2.0h-1.4zM23.9 222.3h1.4v2.0h-1.4zM32.3 222.3h1.4v2.0h-1.4zM23.9 227.8h1.4v2.0h-1.4zM37.9 241.7h1.4v2.0h-1.4zM29.5 252.8h1.4v2.0h-1.4zM37.9 252.8h1.4v2.0h-1.4zM29.5 266.6h1.4v2.0h-1.4zM37.9 266.6h1.4v2.0h-1.4zM29.5 272.2h1.4v2.0h-1.4zM56.1 280.5h1.4v2.0h-1.4zM58.9 280.5h1.4v2.0h-1.4zM54.7 283.3h1.4v2.0h-1.4zM57.5 283.3h1.4v2.0h-1.4zM53.3 299.9h1.4v2.0h-1.4zM65.9 299.9h1.4v2.0h-1.4zM54.7 302.7h1.4v2.0h-1.4zM56.1 302.7h1.4v2.0h-1.4zM70.1 311.0h1.4v2.0h-1.4zM72.9 311.0h1.4v2.0h-1.4zM53.3 316.5h1.4v2.0h-1.4zM56.1 316.5h1.4v2.0h-1.4zM86.9 316.5h1.4v2.0h-1.4zM89.7 316.5h1.4v2.0h-1.4zM77.1 319.3h1.4v2.0h-1.4zM79.9 319.3h1.4v2.0h-1.4zM67.3 358.1h1.4v2.0h-1.4zM68.7 358.1h1.4v2.0h-1.4zM71.5 358.1h1.4v2.0h-1.4zM49.1 366.4h1.4v2.0h-1.4zM95.3 366.4h1.4v2.0h-1.4zM49.1 399.7h1.4v2.0h-1.4zM98.1 399.7h1.4v2.0h-1.4zM12.7 430.2h1.4v2.0h-1.4zM39.3 474.5h1.4v2.0h-1.4zM47.7 474.5h1.4v2.0h-1.4zM63.1 521.7h1.4v2.0h-1.4zM91.1 521.7h1.4v2.0h-1.4zM92.5 521.7h1.4v2.0h-1.4zM96.7 521.7h1.4v2.0h-1.4zM54.7 541.1h1.4v2.0h-1.4zM82.7 541.1h1.4v2.0h-1.4zM26.7 649.2h1.4v2.0h-1.4zM54.7 649.2h1.4v2.0h-1.4zM46.3 665.8h1.4v2.0h-1.4zM74.3 665.8h1.4v2.0h-1.4zM75.7 665.8h1.4v2.0h-1.4zM79.9 665.8h1.4v2.0h-1.4z"/><rect x="60.3" y="88.6" width="26.6" height="3.2" fill="#e08c0a"/><rect x="112.1" y="88.6" width="29.4" height="3.2" fill="#e08c0a"/></svg><div class="abs" style="left:1519.2px;top:117.5px;width:1.1px;height:692px;background:#121212"></div><div class="abs" style="left:1520.3px;top:171.9px;width:15.7px;height:27.7px;background:rgba(121,125,135,0.22)"></div><div class="abs" style="left:1526px;top:175.7px;width:6.6px;height:8.3px;background:rgba(200,135,30,0.6)"></div><div class="abs" style="left:1526px;top:437.8px;width:6.6px;height:25.8px;background:rgba(200,135,30,0.6)"></div><div class="abs" style="left:1526px;top:523.9px;width:6.6px;height:8.1px;background:rgba(200,135,30,0.6)"></div><div class="abs" style="left:1526px;top:557px;width:6.6px;height:14.5px;background:rgba(200,135,30,0.6)"></div><div class="abs" style="left:1526px;top:661.3px;width:6.6px;height:8.7px;background:rgba(200,135,30,0.6)"></div><div class="abs" style="left:1526px;top:694.7px;width:6.6px;height:8.2px;background:rgba(200,135,30,0.6)"></div><div class="abs" style="left:1526px;top:713.3px;width:6.6px;height:18.1px;background:rgba(200,135,30,0.6)"></div><div class="abs" style="left:1520.3px;top:179px;width:15.7px;height:2.8px;background:rgba(205,205,205,0.62)"></div>
<div id="status"></div>
<div class="abs" style="left:0;top:827px;width:47px;height:31px;background:#0078d4"></div>
<svg class="abs" style="left:14px;top:834px" width="20" height="18" fill="none" stroke="#ffffff" stroke-width="1.4"><path d="M3.6 5.5 L10 10.7 L3.6 15.9 M16 0.3 L10 5.5 L16 10.7"/></svg>
<svg class="abs" style="left:56px;top:834px" width="18" height="20" fill="none" stroke="#cccccc" stroke-width="1.4"><circle cx="4" cy="3.5" r="2.3"/><circle cx="4" cy="16.5" r="2.3"/><circle cx="13.5" cy="6" r="2.3"/><path d="M4 5.8 V14.2 M13.5 8.3 Q13.5 12 8 12.5 Q4.5 13 4.2 14.2"/></svg>
<div class="st" style="left:79.6px;top:833px">master*</div>
<svg class="abs" style="left:144px;top:832px" width="22" height="20" fill="none" stroke="#cccccc" stroke-width="1.5" stroke-linejoin="round"><path d="M3.6 10.6 A7 7 0 0 1 17.4 9.2 M14.6 7.4 L17.5 10.4 L20.2 7.2 M17.4 10.4 A7 7 0 0 1 3.6 11.8 M0.9 13.2 L3.6 10.2 L6.5 13"/></svg>
<svg class="abs" style="left:184px;top:834px" width="19" height="19" fill="none" stroke="#cccccc" stroke-width="1.4"><circle cx="9.3" cy="9.3" r="7.8"/><path d="M6 6 L12.6 12.6 M12.6 6 L6 12.6"/></svg>
<div class="st" style="left:207.7px;top:833px">0</div>
<svg class="abs" style="left:221px;top:834px" width="19" height="18" fill="none" stroke="#cccccc" stroke-width="1.4" stroke-linejoin="round"><path d="M9.5 1.5 L17.5 16.5 H1.5 Z M9.5 6.5 V11.5 M9.5 13 V14.5"/></svg>
<div class="st" style="left:244.8px;top:833px">0</div>
<svg class="abs" style="left:276px;top:834px" width="20" height="18" fill="none" stroke="#cccccc" stroke-width="1.4"><path d="M1.5 2 H7.5 L9.5 4 H18 V16 H1.5 Z M1.5 6.5 H18"/></svg>
<div class="st" style="left:300.3px;top:833px">myworkspace</div>
<div class="st" style="left:740px;top:833px">行 114、列 59 (19 個選択)</div>
<div class="st" style="left:947px;top:833px"><span style="display:inline-block;transform:scaleX(0.75);transform-origin:0 0;margin-right:-16.2px">スペース</span>: 4</div>
<div class="st" style="left:1036px;top:833px">UTF-8</div>
<div class="st" style="left:1102px;top:833px">LF</div>
<div class="st" style="left:1139px;top:832px;letter-spacing:-0.5px">{ }</div>
<div class="st" style="left:1164.4px;top:833px">JavaScript</div>
<svg class="abs" style="left:1258px;top:833px" width="18" height="21" fill="none" stroke="#cccccc" stroke-width="1.4"><circle cx="9" cy="8.5" r="7"/><circle cx="9" cy="8.5" r="3.8"/><path d="M9 9 V20" stroke-width="2.6"/></svg>
<div class="st" style="left:1280.7px;top:833px">Go Live</div>
<svg class="abs" style="left:1356px;top:834px" width="21" height="17" fill="none" stroke="#cccccc" stroke-width="1.4"><path d="M1.5 9 L6 14.5 L14 2 M8 9.5 L10.5 14.5 L19.5 2"/></svg>
<div class="st" style="left:1381px;top:833px">Prettier</div>
<svg class="abs" style="left:1457px;top:833px" width="20" height="20" fill="none" stroke="#cccccc" stroke-width="1.4"><circle cx="7" cy="8" r="3.5"/><path d="M1 18.5 Q1.5 12.5 7 12.5 Q11 12.5 12.5 16 M10 2 H18.5 V10 H14 L11.5 12.5"/></svg>
<svg class="abs" style="left:1499px;top:833px" width="18" height="20" fill="none" stroke="#cccccc" stroke-width="1.4"><path d="M9 2 Q3.3 2 3.3 8.5 V13.5 L1.5 16 H16.5 L14.7 13.5 V8.5 Q14.7 2 9 2 Z M6.5 17.5 Q9 20.5 11.5 17.5"/></svg>
<div class="abs" style="left:0;top:857.8px;width:1536px;height:1.2px;background:#3c3a38"></div>
</body></html>
